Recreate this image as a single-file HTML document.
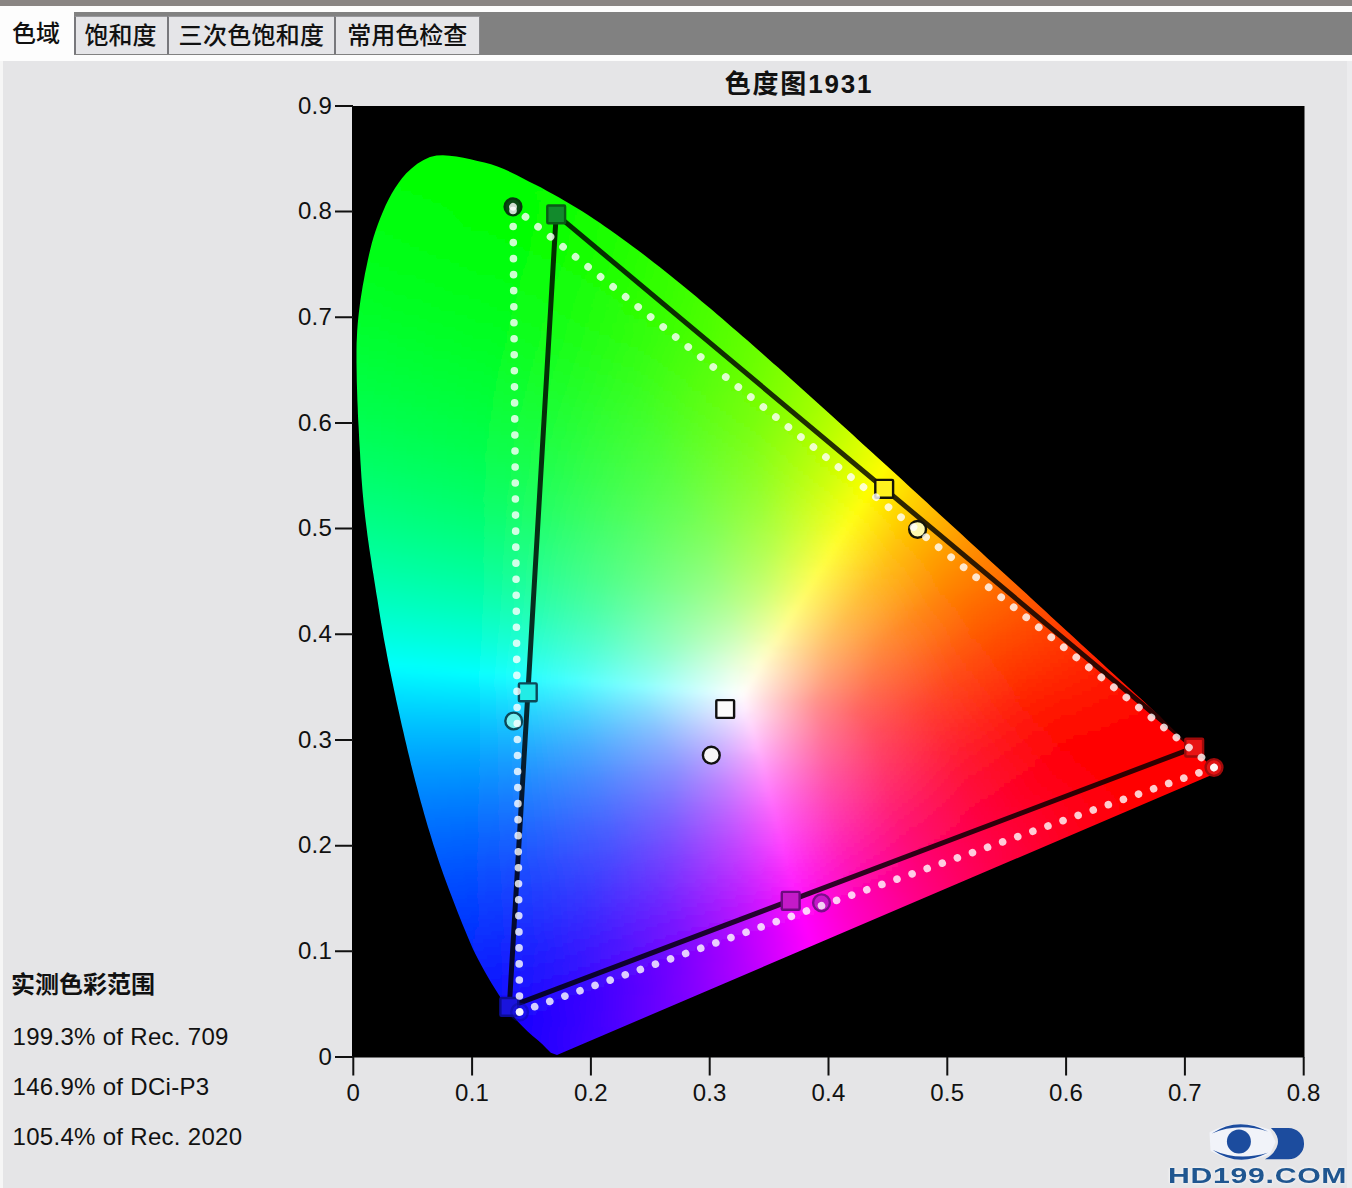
<!DOCTYPE html>
<html lang="zh-CN"><head><meta charset="utf-8"><title>色度图1931</title>
<style>
html,body{margin:0;padding:0}
body{width:1352px;height:1188px;position:relative;overflow:hidden;background:#e5e5e7;font-family:"Liberation Sans","Noto Sans CJK SC",sans-serif;color:#111}
.abs{position:absolute;white-space:nowrap}
.bar0{left:0;top:0;width:1352px;height:6px;background:#8a8583}
.bar1{left:0;top:6px;width:1352px;height:6px;background:#fdfdfd}
.bar2{left:0;top:12px;width:1352px;height:43px;background:#818181}
.bar3{left:0;top:55px;width:1352px;height:6px;background:#fcfcfc}
.lstrip{left:0;top:55px;width:3px;height:1133px;background:#f6f6f6}
.rstrip{left:1347px;top:61px;width:5px;height:1127px;background:#ececee}
.tab{top:16px;height:38px;background:#e5e5e8;border-left:2px solid #78787c;border-top:1px solid #98989c;box-sizing:border-box;font-size:24px;font-weight:500;line-height:37px;text-align:center}
.tab0{left:0;top:12px;width:74px;height:49px;background:#fdfdfd;font-size:24px;font-weight:500;line-height:44px;text-align:center;text-indent:-2px}
.lab{font-size:24px;line-height:24px;letter-spacing:.2px}
.yl{text-align:right;width:60px;left:272px}
.xl{text-align:center;width:80px}
.title{left:599px;width:400px;top:68px;text-align:center;font-weight:bold;font-size:26px;line-height:32px;letter-spacing:1.8px}
.info{left:12.5px;font-size:24px;line-height:30px;letter-spacing:.3px}
.logo{left:1168px;top:1165px;font-family:"Liberation Sans",sans-serif;font-weight:bold;font-size:21.5px;line-height:22px;color:#1f5690;letter-spacing:.5px;transform-origin:0 0;transform:scaleX(1.405);text-shadow:0 0 3px #fff}
</style></head><body>
<div class="abs bar0"></div><div class="abs bar1"></div><div class="abs bar2"></div><div class="abs bar3"></div><div class="abs lstrip"></div><div class="abs rstrip"></div>
<div class="abs tab0">色域</div>
<div class="abs tab" style="left:74px;width:93px;text-indent:-2px">饱和度</div>
<div class="abs tab" style="left:166.500px;width:168px;letter-spacing:.3px">三次色饱和度</div>
<div class="abs tab" style="left:334px;width:145.500px;border-right:1px solid #8a8a8e">常用色检查</div>
<div class="abs title">色度图1931</div>
<svg width="1352" height="1188" viewBox="0 0 1352 1188" style="position:absolute;left:0;top:0">
<defs><filter id="fb" filterUnits="userSpaceOnUse" x="330" y="130" width="920" height="950"><feGaussianBlur stdDeviation="2.5"/></filter><filter id="bl" x="-.05" y="-.05" width="1.1" height="1.1"><feGaussianBlur stdDeviation="0.7"/></filter><clipPath id="lc"><polygon points="557.0,1055.0 550.8,1052.8 546.5,1048.6 542.4,1044.3 537.6,1040.1 532.4,1035.8 527.4,1031.3 522.6,1026.6 518.0,1021.8 513.8,1016.7 509.8,1011.4 506.0,1006.0 502.4,1000.4 498.9,994.9 495.3,989.2 491.7,983.5 488.3,977.7 485.0,971.9 481.7,966.0 478.5,960.1 475.5,954.2 472.6,948.3 470.0,942.3 467.5,936.3 465.0,930.3 462.5,924.2 460.1,918.2 457.7,912.2 455.3,906.1 453.0,900.0 450.7,894.0 448.4,887.9 446.1,881.8 443.9,875.7 441.7,869.6 439.6,863.4 437.5,857.3 435.5,851.1 433.5,845.0 431.6,838.8 429.7,832.6 427.8,826.4 426.0,820.2 424.2,814.0 422.5,807.7 420.7,801.5 419.0,795.3 417.4,789.0 415.7,782.7 414.1,776.5 412.5,770.2 410.9,763.9 409.4,757.6 407.9,751.4 406.4,745.1 404.9,738.8 403.5,732.5 402.0,726.2 400.6,719.9 399.2,713.6 397.8,707.3 396.4,701.0 395.1,694.7 393.7,688.3 392.4,682.0 391.1,675.7 389.8,669.4 388.5,663.0 387.3,656.7 386.1,650.3 384.9,644.0 383.7,637.7 382.6,631.3 381.5,625.0 380.4,618.6 379.4,612.2 378.4,605.9 377.4,599.5 376.3,593.2 375.3,586.8 374.3,580.4 373.3,574.0 372.2,567.7 371.3,561.3 370.3,554.9 369.3,548.5 368.4,542.1 367.5,535.7 366.7,529.3 365.9,522.9 365.1,516.5 364.4,510.1 363.7,503.7 363.1,497.3 362.5,490.9 362.0,484.5 361.5,478.1 361.1,471.7 360.7,465.3 360.3,458.9 360.0,452.4 359.6,446.0 359.2,439.6 358.9,433.1 358.6,426.7 358.2,420.3 357.9,413.8 357.7,407.4 357.4,401.0 357.2,394.5 357.0,388.1 356.8,381.7 356.7,375.3 356.6,368.9 356.5,362.5 356.5,356.1 356.5,349.7 356.6,343.3 356.9,336.9 357.2,330.5 357.7,324.1 358.3,317.7 359.0,311.3 359.8,305.0 360.7,298.6 361.7,292.3 362.7,286.0 363.9,279.8 365.0,273.6 366.3,267.4 367.6,261.3 368.9,255.2 370.3,249.2 371.8,243.2 373.6,237.0 375.7,230.6 377.9,224.2 380.4,217.8 383.0,211.4 385.8,205.1 388.8,199.1 391.9,193.3 395.1,187.9 398.5,182.9 402.0,178.3 406.3,173.3 411.5,168.4 417.3,163.8 423.6,159.9 430.0,157.0 436.5,155.4 442.9,155.2 449.5,155.7 456.4,156.6 463.4,157.8 470.5,159.3 477.5,160.9 484.4,162.5 491.0,164.2 497.5,166.4 503.9,169.0 510.2,171.9 516.5,175.0 522.7,178.2 528.8,181.4 535.0,184.5 541.1,187.6 547.1,190.9 553.2,194.2 559.1,197.6 565.0,201.0 570.9,204.5 576.8,208.1 582.6,211.6 588.4,215.2 594.0,219.0 599.7,222.8 605.3,226.7 610.8,230.6 616.4,234.5 621.9,238.5 627.4,242.4 632.8,246.5 638.3,250.5 643.6,254.6 649.0,258.7 654.4,262.9 659.7,267.1 665.0,271.2 670.3,275.4 675.5,279.7 680.8,283.9 686.0,288.2 691.2,292.5 696.4,296.8 701.5,301.2 706.7,305.5 711.9,309.8 717.0,314.2 722.1,318.6 727.2,323.0 732.3,327.4 737.4,331.8 742.5,336.2 747.6,340.6 752.6,345.1 757.7,349.5 762.8,353.9 767.8,358.4 772.8,362.9 777.9,367.3 782.9,371.8 787.9,376.3 792.9,380.7 797.9,385.2 802.9,389.7 807.9,394.2 812.9,398.7 817.9,403.2 822.9,407.8 827.9,412.3 832.9,416.8 837.8,421.3 842.8,425.8 847.8,430.3 852.8,434.8 857.8,439.4 862.7,443.9 867.7,448.4 872.7,452.9 877.6,457.4 882.6,462.0 887.6,466.5 892.5,471.0 897.5,475.6 902.4,480.1 907.4,484.7 912.3,489.2 917.3,493.7 922.2,498.3 927.2,502.8 932.1,507.4 937.1,511.9 942.0,516.5 947.0,521.0 951.9,525.5 956.9,530.1 961.8,534.6 966.8,539.2 971.7,543.7 976.7,548.3 981.6,552.8 986.6,557.4 991.5,561.9 996.5,566.4 1001.4,571.0 1006.4,575.5 1011.3,580.0 1016.3,584.6 1021.2,589.1 1026.2,593.6 1031.2,598.2 1036.1,602.7 1041.0,607.3 1046.0,611.8 1050.9,616.4 1055.9,620.9 1060.8,625.5 1065.7,630.0 1070.7,634.6 1075.6,639.1 1080.6,643.7 1085.6,648.2 1090.5,652.7 1095.5,657.3 1100.4,661.8 1105.4,666.4 1110.3,670.9 1115.3,675.4 1120.2,680.0 1125.2,684.5 1130.2,689.0 1135.1,693.5 1140.1,698.1 1145.0,702.6 1150.0,707.2 1154.9,711.7 1159.9,716.3 1164.7,721.0 1169.5,725.7 1174.3,730.4 1179.1,735.1 1184.0,739.8 1188.8,744.5 1193.6,749.2 1198.4,753.9 1203.2,758.6 1208.1,763.2 1213.0,767.8 1218.0,772.3"/></clipPath><linearGradient id="g0" gradientUnits="userSpaceOnUse" x1="415" x2="481"><stop offset="0" stop-color="#00ff00"/><stop offset="1" stop-color="#00ff00"/></linearGradient><linearGradient id="g1" gradientUnits="userSpaceOnUse" x1="408" x2="498"><stop offset="0" stop-color="#00ff00"/><stop offset="1" stop-color="#00ff00"/></linearGradient><linearGradient id="g2" gradientUnits="userSpaceOnUse" x1="403" x2="509"><stop offset="0" stop-color="#00ff00"/><stop offset="1" stop-color="#00ff00"/></linearGradient><linearGradient id="g3" gradientUnits="userSpaceOnUse" x1="398" x2="520"><stop offset="0" stop-color="#00ff00"/><stop offset="1" stop-color="#00ff00"/></linearGradient><linearGradient id="g4" gradientUnits="userSpaceOnUse" x1="394" x2="528"><stop offset="0" stop-color="#00ff02"/><stop offset="1" stop-color="#01ff00"/></linearGradient><linearGradient id="g5" gradientUnits="userSpaceOnUse" x1="391" x2="535"><stop offset="0" stop-color="#00ff03"/><stop offset="1" stop-color="#03ff00"/></linearGradient><linearGradient id="g6" gradientUnits="userSpaceOnUse" x1="388" x2="544"><stop offset="0" stop-color="#00ff04"/><stop offset="0.872" stop-color="#01ff00"/><stop offset="1" stop-color="#06ff00"/></linearGradient><linearGradient id="g7" gradientUnits="userSpaceOnUse" x1="385" x2="551"><stop offset="0" stop-color="#00ff05"/><stop offset="0.687" stop-color="#00ff00"/><stop offset="0.964" stop-color="#06ff00"/><stop offset="1" stop-color="#08ff00"/></linearGradient><linearGradient id="g8" gradientUnits="userSpaceOnUse" x1="383" x2="559"><stop offset="0" stop-color="#00ff06"/><stop offset="0.636" stop-color="#00ff00"/><stop offset="0.898" stop-color="#05ff00"/><stop offset="1" stop-color="#0aff00"/></linearGradient><linearGradient id="g9" gradientUnits="userSpaceOnUse" x1="380" x2="566"><stop offset="0" stop-color="#00ff07"/><stop offset="0.613" stop-color="#00ff00"/><stop offset="0.86" stop-color="#05ff00"/><stop offset="1" stop-color="#0cff00"/></linearGradient><linearGradient id="g10" gradientUnits="userSpaceOnUse" x1="378" x2="572"><stop offset="0" stop-color="#00ff08"/><stop offset="0.619" stop-color="#00ff00"/><stop offset="0.825" stop-color="#05ff00"/><stop offset="1" stop-color="#0eff00"/></linearGradient><linearGradient id="g11" gradientUnits="userSpaceOnUse" x1="376" x2="580"><stop offset="0" stop-color="#00ff09"/><stop offset="0.627" stop-color="#00ff00"/><stop offset="0.971" stop-color="#0fff00"/><stop offset="1" stop-color="#11ff00"/></linearGradient><linearGradient id="g12" gradientUnits="userSpaceOnUse" x1="375" x2="587"><stop offset="0" stop-color="#00ff0a"/><stop offset="0.642" stop-color="#00ff00"/><stop offset="1" stop-color="#13ff00"/></linearGradient><linearGradient id="g13" gradientUnits="userSpaceOnUse" x1="373" x2="593"><stop offset="0" stop-color="#00ff0b"/><stop offset="0.655" stop-color="#00ff00"/><stop offset="1" stop-color="#15ff00"/></linearGradient><linearGradient id="g14" gradientUnits="userSpaceOnUse" x1="371" x2="599"><stop offset="0" stop-color="#00ff0c"/><stop offset="0.675" stop-color="#03ff00"/><stop offset="1" stop-color="#17ff00"/></linearGradient><linearGradient id="g15" gradientUnits="userSpaceOnUse" x1="369" x2="605"><stop offset="0" stop-color="#00ff0d"/><stop offset="0.669" stop-color="#03ff00"/><stop offset="1" stop-color="#19ff00"/></linearGradient><linearGradient id="g16" gradientUnits="userSpaceOnUse" x1="368" x2="610"><stop offset="0" stop-color="#00ff0e"/><stop offset="0.653" stop-color="#03ff00"/><stop offset="1" stop-color="#1bff00"/></linearGradient><linearGradient id="g17" gradientUnits="userSpaceOnUse" x1="366" x2="616"><stop offset="0" stop-color="#00ff0f"/><stop offset="0.632" stop-color="#03ff00"/><stop offset="1" stop-color="#1dff00"/></linearGradient><linearGradient id="g18" gradientUnits="userSpaceOnUse" x1="365" x2="623"><stop offset="0" stop-color="#00ff10"/><stop offset="0.62" stop-color="#03ff00"/><stop offset="1" stop-color="#20ff00"/></linearGradient><linearGradient id="g19" gradientUnits="userSpaceOnUse" x1="364" x2="628"><stop offset="0" stop-color="#00ff11"/><stop offset="0.606" stop-color="#03ff00"/><stop offset="1" stop-color="#22ff00"/></linearGradient><linearGradient id="g20" gradientUnits="userSpaceOnUse" x1="363" x2="633"><stop offset="0" stop-color="#00ff12"/><stop offset="0.593" stop-color="#03ff01"/><stop offset="1" stop-color="#24ff00"/></linearGradient><linearGradient id="g21" gradientUnits="userSpaceOnUse" x1="361" x2="639"><stop offset="0" stop-color="#00ff14"/><stop offset="0.576" stop-color="#03ff03"/><stop offset="1" stop-color="#26ff00"/></linearGradient><linearGradient id="g22" gradientUnits="userSpaceOnUse" x1="360" x2="644"><stop offset="0" stop-color="#00ff15"/><stop offset="0.563" stop-color="#03ff04"/><stop offset="0.901" stop-color="#1fff00"/><stop offset="1" stop-color="#28ff00"/></linearGradient><linearGradient id="g23" gradientUnits="userSpaceOnUse" x1="359" x2="649"><stop offset="0" stop-color="#00ff16"/><stop offset="0.552" stop-color="#03ff05"/><stop offset="0.828" stop-color="#1aff00"/><stop offset="1" stop-color="#2aff00"/></linearGradient><linearGradient id="g24" gradientUnits="userSpaceOnUse" x1="358" x2="656"><stop offset="0" stop-color="#00ff17"/><stop offset="0.537" stop-color="#03ff06"/><stop offset="0.805" stop-color="#1aff00"/><stop offset="1" stop-color="#2dff00"/></linearGradient><linearGradient id="g25" gradientUnits="userSpaceOnUse" x1="358" x2="660"><stop offset="0" stop-color="#00ff18"/><stop offset="0.53" stop-color="#03ff07"/><stop offset="0.795" stop-color="#1aff00"/><stop offset="1" stop-color="#2fff00"/></linearGradient><linearGradient id="g26" gradientUnits="userSpaceOnUse" x1="357" x2="665"><stop offset="0" stop-color="#00ff19"/><stop offset="0.519" stop-color="#03ff08"/><stop offset="0.799" stop-color="#1cff00"/><stop offset="1" stop-color="#31ff00"/></linearGradient><linearGradient id="g27" gradientUnits="userSpaceOnUse" x1="356" x2="670"><stop offset="0" stop-color="#00ff1a"/><stop offset="0.51" stop-color="#03ff09"/><stop offset="0.803" stop-color="#1eff00"/><stop offset="1" stop-color="#33ff00"/></linearGradient><linearGradient id="g28" gradientUnits="userSpaceOnUse" x1="355" x2="675"><stop offset="0" stop-color="#00ff1b"/><stop offset="0.5" stop-color="#03ff0b"/><stop offset="0.787" stop-color="#1eff00"/><stop offset="1" stop-color="#36ff00"/></linearGradient><linearGradient id="g29" gradientUnits="userSpaceOnUse" x1="354" x2="680"><stop offset="0" stop-color="#00ff1c"/><stop offset="0.491" stop-color="#03ff0c"/><stop offset="0.798" stop-color="#21ff00"/><stop offset="1" stop-color="#38ff00"/></linearGradient><linearGradient id="g30" gradientUnits="userSpaceOnUse" x1="354" x2="686"><stop offset="0" stop-color="#00ff1d"/><stop offset="0.476" stop-color="#03ff0d"/><stop offset="0.801" stop-color="#23ff00"/><stop offset="1" stop-color="#3bff00"/></linearGradient><linearGradient id="g31" gradientUnits="userSpaceOnUse" x1="353" x2="691"><stop offset="0" stop-color="#00ff1e"/><stop offset="0.467" stop-color="#03ff0e"/><stop offset="0.805" stop-color="#25ff00"/><stop offset="1" stop-color="#3dff00"/></linearGradient><linearGradient id="g32" gradientUnits="userSpaceOnUse" x1="352" x2="696"><stop offset="0" stop-color="#00ff20"/><stop offset="0.459" stop-color="#03ff10"/><stop offset="0.808" stop-color="#27ff00"/><stop offset="1" stop-color="#40ff00"/></linearGradient><linearGradient id="g33" gradientUnits="userSpaceOnUse" x1="351" x2="701"><stop offset="0" stop-color="#00ff21"/><stop offset="0.451" stop-color="#03ff11"/><stop offset="0.811" stop-color="#2aff00"/><stop offset="1" stop-color="#43ff00"/></linearGradient><linearGradient id="g34" gradientUnits="userSpaceOnUse" x1="351" x2="705"><stop offset="0" stop-color="#00ff22"/><stop offset="0.446" stop-color="#03ff12"/><stop offset="0.819" stop-color="#2cff00"/><stop offset="1" stop-color="#45ff00"/></linearGradient><linearGradient id="g35" gradientUnits="userSpaceOnUse" x1="350" x2="710"><stop offset="0" stop-color="#00ff23"/><stop offset="0.439" stop-color="#03ff13"/><stop offset="0.828" stop-color="#2fff00"/><stop offset="1" stop-color="#47ff00"/></linearGradient><linearGradient id="g36" gradientUnits="userSpaceOnUse" x1="350" x2="714"><stop offset="0" stop-color="#00ff24"/><stop offset="0.429" stop-color="#03ff14"/><stop offset="0.835" stop-color="#32ff00"/><stop offset="1" stop-color="#4aff00"/></linearGradient><linearGradient id="g37" gradientUnits="userSpaceOnUse" x1="349" x2="719"><stop offset="0" stop-color="#00ff25"/><stop offset="0.422" stop-color="#03ff16"/><stop offset="0.832" stop-color="#33ff00"/><stop offset="1" stop-color="#4cff00"/></linearGradient><linearGradient id="g38" gradientUnits="userSpaceOnUse" x1="349" x2="725"><stop offset="0" stop-color="#00ff27"/><stop offset="0.415" stop-color="#03ff17"/><stop offset="0.835" stop-color="#36ff00"/><stop offset="1" stop-color="#50ff00"/></linearGradient><linearGradient id="g39" gradientUnits="userSpaceOnUse" x1="348" x2="728"><stop offset="0" stop-color="#00ff28"/><stop offset="0.411" stop-color="#03ff18"/><stop offset="0.842" stop-color="#39ff00"/><stop offset="1" stop-color="#52ff00"/></linearGradient><linearGradient id="g40" gradientUnits="userSpaceOnUse" x1="348" x2="734"><stop offset="0" stop-color="#00ff29"/><stop offset="0.399" stop-color="#03ff19"/><stop offset="0.762" stop-color="#2fff03"/><stop offset="1" stop-color="#55ff00"/></linearGradient><linearGradient id="g41" gradientUnits="userSpaceOnUse" x1="347" x2="739"><stop offset="0" stop-color="#00ff2a"/><stop offset="0.393" stop-color="#03ff1b"/><stop offset="0.791" stop-color="#35ff01"/><stop offset="1" stop-color="#58ff00"/></linearGradient><linearGradient id="g42" gradientUnits="userSpaceOnUse" x1="347" x2="743"><stop offset="0" stop-color="#00ff2c"/><stop offset="0.389" stop-color="#03ff1c"/><stop offset="0.763" stop-color="#33ff04"/><stop offset="0.904" stop-color="#4aff00"/><stop offset="1" stop-color="#5bff00"/></linearGradient><linearGradient id="g43" gradientUnits="userSpaceOnUse" x1="347" x2="747"><stop offset="0" stop-color="#00ff2d"/><stop offset="0.38" stop-color="#03ff1d"/><stop offset="0.74" stop-color="#31ff07"/><stop offset="0.85" stop-color="#43ff00"/><stop offset="1" stop-color="#5eff00"/></linearGradient><linearGradient id="g44" gradientUnits="userSpaceOnUse" x1="346" x2="752"><stop offset="0" stop-color="#00ff2e"/><stop offset="0.374" stop-color="#03ff1f"/><stop offset="0.764" stop-color="#37ff05"/><stop offset="0.872" stop-color="#49ff00"/><stop offset="1" stop-color="#61ff00"/></linearGradient><linearGradient id="g45" gradientUnits="userSpaceOnUse" x1="346" x2="756"><stop offset="0" stop-color="#00ff30"/><stop offset="0.371" stop-color="#03ff20"/><stop offset="0.741" stop-color="#35ff08"/><stop offset="0.859" stop-color="#48ff00"/><stop offset="1" stop-color="#64ff00"/></linearGradient><linearGradient id="g46" gradientUnits="userSpaceOnUse" x1="346" x2="762"><stop offset="0" stop-color="#00ff31"/><stop offset="0.361" stop-color="#03ff21"/><stop offset="0.712" stop-color="#32ff0b"/><stop offset="0.846" stop-color="#49ff00"/><stop offset="1" stop-color="#68ff00"/></linearGradient><linearGradient id="g47" gradientUnits="userSpaceOnUse" x1="346" x2="766"><stop offset="0" stop-color="#00ff32"/><stop offset="0.357" stop-color="#03ff22"/><stop offset="0.686" stop-color="#30ff0e"/><stop offset="0.852" stop-color="#4cff00"/><stop offset="1" stop-color="#6bff00"/></linearGradient><linearGradient id="g48" gradientUnits="userSpaceOnUse" x1="346" x2="770"><stop offset="0" stop-color="#00ff34"/><stop offset="0.354" stop-color="#03ff24"/><stop offset="0.717" stop-color="#36ff0c"/><stop offset="0.858" stop-color="#50ff00"/><stop offset="1" stop-color="#6eff00"/></linearGradient><linearGradient id="g49" gradientUnits="userSpaceOnUse" x1="346" x2="774"><stop offset="0" stop-color="#00ff35"/><stop offset="0.346" stop-color="#03ff25"/><stop offset="0.682" stop-color="#32ff10"/><stop offset="0.86" stop-color="#52ff00"/><stop offset="1" stop-color="#71ff00"/></linearGradient><linearGradient id="g50" gradientUnits="userSpaceOnUse" x1="346" x2="780"><stop offset="0" stop-color="#00ff36"/><stop offset="0.341" stop-color="#03ff26"/><stop offset="0.668" stop-color="#32ff12"/><stop offset="0.862" stop-color="#56ff00"/><stop offset="1" stop-color="#76ff00"/></linearGradient><linearGradient id="g51" gradientUnits="userSpaceOnUse" x1="346" x2="784"><stop offset="0" stop-color="#00ff38"/><stop offset="0.333" stop-color="#03ff28"/><stop offset="0.676" stop-color="#35ff12"/><stop offset="0.858" stop-color="#58ff00"/><stop offset="1" stop-color="#79ff00"/></linearGradient><linearGradient id="g52" gradientUnits="userSpaceOnUse" x1="346" x2="788"><stop offset="0" stop-color="#00ff39"/><stop offset="0.33" stop-color="#03ff29"/><stop offset="0.665" stop-color="#35ff14"/><stop offset="0.86" stop-color="#5aff00"/><stop offset="1" stop-color="#7dff00"/></linearGradient><linearGradient id="g53" gradientUnits="userSpaceOnUse" x1="346" x2="794"><stop offset="0" stop-color="#00ff3b"/><stop offset="0.321" stop-color="#03ff2b"/><stop offset="0.661" stop-color="#36ff15"/><stop offset="0.862" stop-color="#5eff00"/><stop offset="1" stop-color="#82ff00"/></linearGradient><linearGradient id="g54" gradientUnits="userSpaceOnUse" x1="346" x2="798"><stop offset="0" stop-color="#00ff3c"/><stop offset="0.319" stop-color="#03ff2c"/><stop offset="0.65" stop-color="#36ff17"/><stop offset="0.863" stop-color="#61ff00"/><stop offset="1" stop-color="#86ff00"/></linearGradient><linearGradient id="g55" gradientUnits="userSpaceOnUse" x1="346" x2="802"><stop offset="0" stop-color="#00ff3e"/><stop offset="0.311" stop-color="#03ff2d"/><stop offset="0.627" stop-color="#33ff1a"/><stop offset="0.868" stop-color="#65ff00"/><stop offset="1" stop-color="#8aff00"/></linearGradient><linearGradient id="g56" gradientUnits="userSpaceOnUse" x1="346" x2="806"><stop offset="0" stop-color="#00ff3f"/><stop offset="0.309" stop-color="#03ff2f"/><stop offset="0.648" stop-color="#39ff19"/><stop offset="0.87" stop-color="#68ff00"/><stop offset="1" stop-color="#8eff00"/></linearGradient><linearGradient id="g57" gradientUnits="userSpaceOnUse" x1="346" x2="810"><stop offset="0" stop-color="#00ff41"/><stop offset="0.306" stop-color="#03ff30"/><stop offset="0.629" stop-color="#37ff1c"/><stop offset="0.871" stop-color="#6bff00"/><stop offset="1" stop-color="#92ff00"/></linearGradient><linearGradient id="g58" gradientUnits="userSpaceOnUse" x1="346" x2="816"><stop offset="0" stop-color="#00ff42"/><stop offset="0.298" stop-color="#03ff32"/><stop offset="0.626" stop-color="#38ff1d"/><stop offset="0.872" stop-color="#70ff00"/><stop offset="1" stop-color="#97ff00"/></linearGradient><linearGradient id="g59" gradientUnits="userSpaceOnUse" x1="346" x2="820"><stop offset="0" stop-color="#00ff44"/><stop offset="0.295" stop-color="#03ff33"/><stop offset="0.616" stop-color="#38ff1f"/><stop offset="0.861" stop-color="#6fff00"/><stop offset="1" stop-color="#9cff00"/></linearGradient><linearGradient id="g60" gradientUnits="userSpaceOnUse" x1="346" x2="824"><stop offset="0" stop-color="#00ff45"/><stop offset="0.293" stop-color="#03ff34"/><stop offset="0.607" stop-color="#38ff21"/><stop offset="0.854" stop-color="#70ff00"/><stop offset="1" stop-color="#a0ff00"/></linearGradient><linearGradient id="g61" gradientUnits="userSpaceOnUse" x1="346" x2="828"><stop offset="0" stop-color="#00ff47"/><stop offset="0.286" stop-color="#03ff36"/><stop offset="0.61" stop-color="#3aff22"/><stop offset="0.871" stop-color="#79ff00"/><stop offset="1" stop-color="#a5ff00"/></linearGradient><linearGradient id="g62" gradientUnits="userSpaceOnUse" x1="346" x2="834"><stop offset="0" stop-color="#00ff49"/><stop offset="0.283" stop-color="#03ff37"/><stop offset="0.598" stop-color="#3aff24"/><stop offset="0.869" stop-color="#7cff00"/><stop offset="1" stop-color="#acff00"/></linearGradient><linearGradient id="g63" gradientUnits="userSpaceOnUse" x1="347" x2="837"><stop offset="0" stop-color="#00ff4a"/><stop offset="0.278" stop-color="#03ff39"/><stop offset="0.6" stop-color="#3cff25"/><stop offset="0.853" stop-color="#7aff00"/><stop offset="1" stop-color="#b0ff00"/></linearGradient><linearGradient id="g64" gradientUnits="userSpaceOnUse" x1="347" x2="841"><stop offset="0" stop-color="#00ff4c"/><stop offset="0.275" stop-color="#03ff3a"/><stop offset="0.591" stop-color="#3cff27"/><stop offset="0.846" stop-color="#7bff02"/><stop offset="1" stop-color="#b5ff00"/></linearGradient><linearGradient id="g65" gradientUnits="userSpaceOnUse" x1="347" x2="847"><stop offset="0" stop-color="#00ff4e"/><stop offset="0.272" stop-color="#03ff3c"/><stop offset="0.6" stop-color="#40ff27"/><stop offset="0.836" stop-color="#7cff04"/><stop offset="0.916" stop-color="#99ff00"/><stop offset="1" stop-color="#bcff00"/></linearGradient><linearGradient id="g66" gradientUnits="userSpaceOnUse" x1="347" x2="851"><stop offset="0" stop-color="#00ff4f"/><stop offset="0.266" stop-color="#03ff3e"/><stop offset="0.591" stop-color="#40ff29"/><stop offset="0.81" stop-color="#77ff09"/><stop offset="0.881" stop-color="#90ff00"/><stop offset="1" stop-color="#c1ff00"/></linearGradient><linearGradient id="g67" gradientUnits="userSpaceOnUse" x1="347" x2="855"><stop offset="0" stop-color="#00ff51"/><stop offset="0.264" stop-color="#03ff3f"/><stop offset="0.587" stop-color="#40ff2b"/><stop offset="0.803" stop-color="#78ff0b"/><stop offset="0.878" stop-color="#93ff00"/><stop offset="1" stop-color="#c7ff00"/></linearGradient><linearGradient id="g68" gradientUnits="userSpaceOnUse" x1="347" x2="859"><stop offset="0" stop-color="#00ff53"/><stop offset="0.262" stop-color="#03ff41"/><stop offset="0.586" stop-color="#42ff2c"/><stop offset="0.797" stop-color="#79ff0c"/><stop offset="0.879" stop-color="#97ff00"/><stop offset="1" stop-color="#cdff00"/></linearGradient><linearGradient id="g69" gradientUnits="userSpaceOnUse" x1="348" x2="864"><stop offset="0" stop-color="#00ff55"/><stop offset="0.256" stop-color="#03ff43"/><stop offset="0.589" stop-color="#45ff2d"/><stop offset="0.791" stop-color="#7bff0e"/><stop offset="0.876" stop-color="#9bff00"/><stop offset="1" stop-color="#d3ff00"/></linearGradient><linearGradient id="g70" gradientUnits="userSpaceOnUse" x1="348" x2="868"><stop offset="0" stop-color="#00ff56"/><stop offset="0.254" stop-color="#03ff44"/><stop offset="0.581" stop-color="#45ff2f"/><stop offset="0.769" stop-color="#77ff12"/><stop offset="0.877" stop-color="#a0ff00"/><stop offset="1" stop-color="#d9ff00"/></linearGradient><linearGradient id="g71" gradientUnits="userSpaceOnUse" x1="348" x2="872"><stop offset="0" stop-color="#00ff58"/><stop offset="0.252" stop-color="#03ff46"/><stop offset="0.576" stop-color="#45ff31"/><stop offset="0.775" stop-color="#7cff12"/><stop offset="0.878" stop-color="#a5ff00"/><stop offset="1" stop-color="#dfff00"/></linearGradient><linearGradient id="g72" gradientUnits="userSpaceOnUse" x1="348" x2="878"><stop offset="0" stop-color="#00ff5a"/><stop offset="0.249" stop-color="#03ff48"/><stop offset="0.577" stop-color="#48ff32"/><stop offset="0.766" stop-color="#7dff14"/><stop offset="0.875" stop-color="#aaff00"/><stop offset="1" stop-color="#e8ff00"/></linearGradient><linearGradient id="g73" gradientUnits="userSpaceOnUse" x1="348" x2="882"><stop offset="0" stop-color="#00ff5c"/><stop offset="0.243" stop-color="#03ff4a"/><stop offset="0.581" stop-color="#4bff33"/><stop offset="0.757" stop-color="#7dff16"/><stop offset="0.876" stop-color="#afff00"/><stop offset="1" stop-color="#eeff00"/></linearGradient><linearGradient id="g74" gradientUnits="userSpaceOnUse" x1="348" x2="886"><stop offset="0" stop-color="#00ff5e"/><stop offset="0.242" stop-color="#03ff4b"/><stop offset="0.565" stop-color="#49ff36"/><stop offset="0.747" stop-color="#7dff19"/><stop offset="0.877" stop-color="#b4ff00"/><stop offset="1" stop-color="#f5ff00"/></linearGradient><linearGradient id="g75" gradientUnits="userSpaceOnUse" x1="349" x2="891"><stop offset="0" stop-color="#00ff60"/><stop offset="0.24" stop-color="#03ff4d"/><stop offset="0.568" stop-color="#4cff37"/><stop offset="0.745" stop-color="#80ff1a"/><stop offset="0.878" stop-color="#bbff00"/><stop offset="1" stop-color="#fcff00"/></linearGradient><linearGradient id="g76" gradientUnits="userSpaceOnUse" x1="349" x2="895"><stop offset="0" stop-color="#00ff62"/><stop offset="0.234" stop-color="#03ff4f"/><stop offset="0.571" stop-color="#4fff38"/><stop offset="0.736" stop-color="#80ff1d"/><stop offset="0.868" stop-color="#bbff00"/><stop offset="0.996" stop-color="#fffd00"/><stop offset="1" stop-color="#fffb00"/></linearGradient><linearGradient id="g77" gradientUnits="userSpaceOnUse" x1="349" x2="899"><stop offset="0" stop-color="#00ff64"/><stop offset="0.233" stop-color="#03ff51"/><stop offset="0.567" stop-color="#4fff3a"/><stop offset="0.745" stop-color="#87ff1c"/><stop offset="0.88" stop-color="#c6ff00"/><stop offset="0.985" stop-color="#fffd00"/><stop offset="1" stop-color="#fff500"/></linearGradient><linearGradient id="g78" gradientUnits="userSpaceOnUse" x1="349" x2="903"><stop offset="0" stop-color="#00ff66"/><stop offset="0.231" stop-color="#03ff53"/><stop offset="0.563" stop-color="#50ff3c"/><stop offset="0.729" stop-color="#84ff20"/><stop offset="0.856" stop-color="#bfff03"/><stop offset="0.975" stop-color="#fffc00"/><stop offset="1" stop-color="#ffee00"/></linearGradient><linearGradient id="g79" gradientUnits="userSpaceOnUse" x1="350" x2="908"><stop offset="0" stop-color="#00ff68"/><stop offset="0.229" stop-color="#03ff55"/><stop offset="0.566" stop-color="#54ff3d"/><stop offset="0.724" stop-color="#86ff21"/><stop offset="0.853" stop-color="#c4ff04"/><stop offset="0.925" stop-color="#ecff00"/><stop offset="0.961" stop-color="#fffd00"/><stop offset="1" stop-color="#ffe700"/></linearGradient><linearGradient id="g80" gradientUnits="userSpaceOnUse" x1="350" x2="912"><stop offset="0" stop-color="#00ff6a"/><stop offset="0.228" stop-color="#03ff57"/><stop offset="0.562" stop-color="#55ff3f"/><stop offset="0.715" stop-color="#86ff24"/><stop offset="0.84" stop-color="#c2ff08"/><stop offset="0.89" stop-color="#deff00"/><stop offset="0.95" stop-color="#fffc00"/><stop offset="1" stop-color="#ffe200"/></linearGradient><linearGradient id="g81" gradientUnits="userSpaceOnUse" x1="350" x2="916"><stop offset="0" stop-color="#00ff6c"/><stop offset="0.226" stop-color="#03ff59"/><stop offset="0.562" stop-color="#56ff41"/><stop offset="0.724" stop-color="#8dff23"/><stop offset="0.855" stop-color="#d0ff05"/><stop offset="0.898" stop-color="#e9ff00"/><stop offset="0.94" stop-color="#fffc00"/><stop offset="1" stop-color="#ffdc00"/></linearGradient><linearGradient id="g82" gradientUnits="userSpaceOnUse" x1="350" x2="920"><stop offset="0" stop-color="#00ff6f"/><stop offset="0.225" stop-color="#03ff5b"/><stop offset="0.558" stop-color="#57ff43"/><stop offset="0.716" stop-color="#8dff26"/><stop offset="0.846" stop-color="#d0ff08"/><stop offset="0.888" stop-color="#e9ff00"/><stop offset="0.926" stop-color="#fffd00"/><stop offset="1" stop-color="#ffd600"/></linearGradient><linearGradient id="g83" gradientUnits="userSpaceOnUse" x1="351" x2="925"><stop offset="0" stop-color="#00ff71"/><stop offset="0.22" stop-color="#03ff5d"/><stop offset="0.561" stop-color="#5bff44"/><stop offset="0.711" stop-color="#8fff28"/><stop offset="0.84" stop-color="#d3ff09"/><stop offset="0.892" stop-color="#f3ff00"/><stop offset="0.916" stop-color="#fffc00"/><stop offset="1" stop-color="#ffd000"/></linearGradient><linearGradient id="g84" gradientUnits="userSpaceOnUse" x1="351" x2="929"><stop offset="0" stop-color="#00ff73"/><stop offset="0.218" stop-color="#03ff5f"/><stop offset="0.557" stop-color="#5cff46"/><stop offset="0.702" stop-color="#8fff2b"/><stop offset="0.824" stop-color="#cfff0e"/><stop offset="0.889" stop-color="#f8ff00"/><stop offset="0.907" stop-color="#fffb00"/><stop offset="1" stop-color="#ffcb00"/></linearGradient><linearGradient id="g85" gradientUnits="userSpaceOnUse" x1="351" x2="935"><stop offset="0" stop-color="#00ff75"/><stop offset="0.216" stop-color="#03ff61"/><stop offset="0.555" stop-color="#5eff48"/><stop offset="0.699" stop-color="#92ff2c"/><stop offset="0.829" stop-color="#daff0d"/><stop offset="0.89" stop-color="#fffd00"/><stop offset="0.986" stop-color="#ffca00"/><stop offset="1" stop-color="#ffc400"/></linearGradient><linearGradient id="g86" gradientUnits="userSpaceOnUse" x1="351" x2="939"><stop offset="0" stop-color="#00ff78"/><stop offset="0.214" stop-color="#03ff64"/><stop offset="0.551" stop-color="#5fff4a"/><stop offset="0.69" stop-color="#92ff30"/><stop offset="0.816" stop-color="#d8ff11"/><stop offset="0.878" stop-color="#fffe00"/><stop offset="0.983" stop-color="#ffc600"/><stop offset="1" stop-color="#ffbf00"/></linearGradient><linearGradient id="g87" gradientUnits="userSpaceOnUse" x1="352" x2="942"><stop offset="0" stop-color="#00ff7a"/><stop offset="0.21" stop-color="#03ff66"/><stop offset="0.559" stop-color="#64ff4b"/><stop offset="0.698" stop-color="#99ff2f"/><stop offset="0.841" stop-color="#edff0b"/><stop offset="0.871" stop-color="#fffd03"/><stop offset="0.973" stop-color="#ffc600"/><stop offset="1" stop-color="#ffbb00"/></linearGradient><linearGradient id="g88" gradientUnits="userSpaceOnUse" x1="352" x2="948"><stop offset="0" stop-color="#00ff7c"/><stop offset="0.208" stop-color="#03ff68"/><stop offset="0.547" stop-color="#63ff4e"/><stop offset="0.681" stop-color="#96ff34"/><stop offset="0.795" stop-color="#d8ff17"/><stop offset="0.859" stop-color="#fffc06"/><stop offset="0.899" stop-color="#ffe400"/><stop offset="1" stop-color="#ffb400"/></linearGradient><linearGradient id="g89" gradientUnits="userSpaceOnUse" x1="352" x2="952"><stop offset="0" stop-color="#00ff7f"/><stop offset="0.21" stop-color="#03ff6a"/><stop offset="0.547" stop-color="#65ff50"/><stop offset="0.68" stop-color="#99ff35"/><stop offset="0.807" stop-color="#e5ff15"/><stop offset="0.847" stop-color="#fffe0a"/><stop offset="0.893" stop-color="#ffe100"/><stop offset="1" stop-color="#ffb000"/></linearGradient><linearGradient id="g90" gradientUnits="userSpaceOnUse" x1="353" x2="955"><stop offset="0" stop-color="#00ff81"/><stop offset="0.206" stop-color="#03ff6d"/><stop offset="0.555" stop-color="#6aff51"/><stop offset="0.678" stop-color="#9cff37"/><stop offset="0.807" stop-color="#ebff16"/><stop offset="0.841" stop-color="#fffc0d"/><stop offset="0.89" stop-color="#ffde00"/><stop offset="1" stop-color="#ffac00"/></linearGradient><linearGradient id="g91" gradientUnits="userSpaceOnUse" x1="353" x2="961"><stop offset="0" stop-color="#00ff83"/><stop offset="0.204" stop-color="#03ff6f"/><stop offset="0.553" stop-color="#6dff53"/><stop offset="0.668" stop-color="#9cff3b"/><stop offset="0.789" stop-color="#e7ff1b"/><stop offset="0.826" stop-color="#fffe11"/><stop offset="0.888" stop-color="#ffd800"/><stop offset="1" stop-color="#ffa600"/></linearGradient><linearGradient id="g92" gradientUnits="userSpaceOnUse" x1="354" x2="964"><stop offset="0" stop-color="#00ff86"/><stop offset="0.203" stop-color="#03ff72"/><stop offset="0.544" stop-color="#6cff56"/><stop offset="0.669" stop-color="#a0ff3c"/><stop offset="0.79" stop-color="#edff1d"/><stop offset="0.82" stop-color="#fffc14"/><stop offset="0.889" stop-color="#ffd300"/><stop offset="1" stop-color="#ffa200"/></linearGradient><linearGradient id="g93" gradientUnits="userSpaceOnUse" x1="354" x2="968"><stop offset="0" stop-color="#00ff88"/><stop offset="0.202" stop-color="#03ff74"/><stop offset="0.544" stop-color="#6eff58"/><stop offset="0.664" stop-color="#a2ff3f"/><stop offset="0.779" stop-color="#ebff21"/><stop offset="0.808" stop-color="#fffe18"/><stop offset="0.889" stop-color="#ffcd00"/><stop offset="1" stop-color="#ff9d00"/></linearGradient><linearGradient id="g94" gradientUnits="userSpaceOnUse" x1="354" x2="974"><stop offset="0" stop-color="#00ff8b"/><stop offset="0.2" stop-color="#03ff77"/><stop offset="0.461" stop-color="#56ff63"/><stop offset="0.59" stop-color="#84ff51"/><stop offset="0.681" stop-color="#b1ff3b"/><stop offset="0.797" stop-color="#fffd1c"/><stop offset="0.887" stop-color="#ffc800"/><stop offset="1" stop-color="#ff9700"/></linearGradient><linearGradient id="g95" gradientUnits="userSpaceOnUse" x1="355" x2="977"><stop offset="0" stop-color="#00ff8d"/><stop offset="0.196" stop-color="#03ff7a"/><stop offset="0.447" stop-color="#53ff66"/><stop offset="0.576" stop-color="#81ff56"/><stop offset="0.669" stop-color="#aeff40"/><stop offset="0.788" stop-color="#fffe20"/><stop offset="0.871" stop-color="#ffcb02"/><stop offset="1" stop-color="#ff9300"/></linearGradient><linearGradient id="g96" gradientUnits="userSpaceOnUse" x1="355" x2="981"><stop offset="0" stop-color="#00ff90"/><stop offset="0.195" stop-color="#03ff7c"/><stop offset="0.454" stop-color="#58ff68"/><stop offset="0.581" stop-color="#86ff57"/><stop offset="0.677" stop-color="#b8ff40"/><stop offset="0.78" stop-color="#fffd23"/><stop offset="0.879" stop-color="#ffc200"/><stop offset="1" stop-color="#ff8f00"/></linearGradient><linearGradient id="g97" gradientUnits="userSpaceOnUse" x1="356" x2="986"><stop offset="0" stop-color="#00ff92"/><stop offset="0.194" stop-color="#03ff7f"/><stop offset="0.451" stop-color="#59ff6a"/><stop offset="0.571" stop-color="#85ff5b"/><stop offset="0.667" stop-color="#b7ff44"/><stop offset="0.768" stop-color="#fffe28"/><stop offset="0.857" stop-color="#ffc706"/><stop offset="0.895" stop-color="#ffb500"/><stop offset="1" stop-color="#ff8a00"/></linearGradient><linearGradient id="g98" gradientUnits="userSpaceOnUse" x1="356" x2="990"><stop offset="0" stop-color="#00ff95"/><stop offset="0.192" stop-color="#03ff82"/><stop offset="0.438" stop-color="#57ff6d"/><stop offset="0.555" stop-color="#82ff60"/><stop offset="0.647" stop-color="#afff4b"/><stop offset="0.76" stop-color="#fffd2b"/><stop offset="0.849" stop-color="#ffc609"/><stop offset="0.89" stop-color="#ffb200"/><stop offset="1" stop-color="#ff8600"/></linearGradient><linearGradient id="g99" gradientUnits="userSpaceOnUse" x1="357" x2="995"><stop offset="0" stop-color="#00ff98"/><stop offset="0.188" stop-color="#03ff85"/><stop offset="0.429" stop-color="#57ff70"/><stop offset="0.552" stop-color="#84ff63"/><stop offset="0.646" stop-color="#b4ff4c"/><stop offset="0.749" stop-color="#fffe30"/><stop offset="0.843" stop-color="#ffc30a"/><stop offset="0.887" stop-color="#ffae00"/><stop offset="1" stop-color="#ff8100"/></linearGradient><linearGradient id="g100" gradientUnits="userSpaceOnUse" x1="357" x2="999"><stop offset="0" stop-color="#00ff9a"/><stop offset="0.187" stop-color="#03ff88"/><stop offset="0.43" stop-color="#59ff72"/><stop offset="0.551" stop-color="#87ff65"/><stop offset="0.642" stop-color="#b6ff4f"/><stop offset="0.741" stop-color="#fffd33"/><stop offset="0.835" stop-color="#ffc20d"/><stop offset="0.885" stop-color="#ffaa00"/><stop offset="1" stop-color="#ff7d00"/></linearGradient><linearGradient id="g101" gradientUnits="userSpaceOnUse" x1="358" x2="1004"><stop offset="0" stop-color="#00ff9d"/><stop offset="0.186" stop-color="#03ff8b"/><stop offset="0.424" stop-color="#59ff75"/><stop offset="0.548" stop-color="#89ff68"/><stop offset="0.638" stop-color="#b9ff52"/><stop offset="0.731" stop-color="#fffe38"/><stop offset="0.824" stop-color="#ffc211"/><stop offset="0.882" stop-color="#ffa600"/><stop offset="1" stop-color="#ff7900"/></linearGradient><linearGradient id="g102" gradientUnits="userSpaceOnUse" x1="359" x2="1009"><stop offset="0" stop-color="#00ffa0"/><stop offset="0.182" stop-color="#03ff8e"/><stop offset="0.425" stop-color="#5cff77"/><stop offset="0.538" stop-color="#89ff6c"/><stop offset="0.625" stop-color="#b6ff57"/><stop offset="0.723" stop-color="#fffc3b"/><stop offset="0.818" stop-color="#ffbf12"/><stop offset="0.88" stop-color="#ffa100"/><stop offset="1" stop-color="#ff7400"/></linearGradient><linearGradient id="g103" gradientUnits="userSpaceOnUse" x1="359" x2="1013"><stop offset="0" stop-color="#00ffa3"/><stop offset="0.18" stop-color="#03ff91"/><stop offset="0.41" stop-color="#58ff7a"/><stop offset="0.529" stop-color="#88ff70"/><stop offset="0.612" stop-color="#b3ff5d"/><stop offset="0.713" stop-color="#fffe40"/><stop offset="0.81" stop-color="#ffbe15"/><stop offset="0.881" stop-color="#ff9c00"/><stop offset="1" stop-color="#ff7000"/></linearGradient><linearGradient id="g104" gradientUnits="userSpaceOnUse" x1="360" x2="1016"><stop offset="0" stop-color="#00ffa5"/><stop offset="0.18" stop-color="#03ff94"/><stop offset="0.427" stop-color="#61ff7c"/><stop offset="0.534" stop-color="#8dff72"/><stop offset="0.616" stop-color="#baff5e"/><stop offset="0.707" stop-color="#fffc43"/><stop offset="0.802" stop-color="#ffbe18"/><stop offset="0.881" stop-color="#ff9800"/><stop offset="1" stop-color="#ff6d00"/></linearGradient><linearGradient id="g105" gradientUnits="userSpaceOnUse" x1="360" x2="1022"><stop offset="0" stop-color="#00ffa8"/><stop offset="0.178" stop-color="#03ff97"/><stop offset="0.396" stop-color="#57ff80"/><stop offset="0.526" stop-color="#8dff76"/><stop offset="0.61" stop-color="#bcff61"/><stop offset="0.695" stop-color="#fffe49"/><stop offset="0.767" stop-color="#ffcb25"/><stop offset="0.873" stop-color="#ff9600"/><stop offset="1" stop-color="#ff6800"/></linearGradient><linearGradient id="g106" gradientUnits="userSpaceOnUse" x1="361" x2="1025"><stop offset="0" stop-color="#00ffab"/><stop offset="0.175" stop-color="#03ff9a"/><stop offset="0.37" stop-color="#4eff85"/><stop offset="0.524" stop-color="#90ff79"/><stop offset="0.602" stop-color="#bbff66"/><stop offset="0.687" stop-color="#fffe4e"/><stop offset="0.792" stop-color="#ffb81b"/><stop offset="0.877" stop-color="#ff9000"/><stop offset="1" stop-color="#ff6500"/></linearGradient><linearGradient id="g107" gradientUnits="userSpaceOnUse" x1="362" x2="1030"><stop offset="0" stop-color="#00ffae"/><stop offset="0.174" stop-color="#03ff9d"/><stop offset="0.374" stop-color="#52ff87"/><stop offset="0.521" stop-color="#92ff7c"/><stop offset="0.605" stop-color="#c3ff67"/><stop offset="0.68" stop-color="#fffc51"/><stop offset="0.781" stop-color="#ffb81e"/><stop offset="0.874" stop-color="#ff8c00"/><stop offset="1" stop-color="#ff6100"/></linearGradient><linearGradient id="g108" gradientUnits="userSpaceOnUse" x1="362" x2="1034"><stop offset="0" stop-color="#00ffb1"/><stop offset="0.173" stop-color="#03ffa1"/><stop offset="0.363" stop-color="#4fff8b"/><stop offset="0.521" stop-color="#96ff7f"/><stop offset="0.595" stop-color="#c1ff6c"/><stop offset="0.67" stop-color="#fffe57"/><stop offset="0.75" stop-color="#ffc52c"/><stop offset="0.866" stop-color="#ff8b00"/><stop offset="1" stop-color="#ff5d00"/></linearGradient><linearGradient id="g109" gradientUnits="userSpaceOnUse" x1="363" x2="1039"><stop offset="0" stop-color="#00ffb4"/><stop offset="0.169" stop-color="#03ffa4"/><stop offset="0.352" stop-color="#4cff8f"/><stop offset="0.521" stop-color="#9aff82"/><stop offset="0.595" stop-color="#c7ff6f"/><stop offset="0.663" stop-color="#fffc5a"/><stop offset="0.751" stop-color="#ffbe2a"/><stop offset="0.861" stop-color="#ff8801"/><stop offset="1" stop-color="#ff5900"/></linearGradient><linearGradient id="g110" gradientUnits="userSpaceOnUse" x1="364" x2="1044"><stop offset="0" stop-color="#00ffb7"/><stop offset="0.168" stop-color="#03ffa7"/><stop offset="0.353" stop-color="#4fff92"/><stop offset="0.521" stop-color="#9eff85"/><stop offset="0.594" stop-color="#cdff72"/><stop offset="0.653" stop-color="#fffd60"/><stop offset="0.741" stop-color="#ffbe2e"/><stop offset="0.856" stop-color="#ff8502"/><stop offset="1" stop-color="#ff5500"/></linearGradient><linearGradient id="g111" gradientUnits="userSpaceOnUse" x1="364" x2="1048"><stop offset="0" stop-color="#00ffbb"/><stop offset="0.167" stop-color="#03ffab"/><stop offset="0.348" stop-color="#4eff96"/><stop offset="0.52" stop-color="#a2ff88"/><stop offset="0.585" stop-color="#cbff77"/><stop offset="0.646" stop-color="#fffc64"/><stop offset="0.734" stop-color="#ffbd31"/><stop offset="0.845" stop-color="#ff8505"/><stop offset="0.889" stop-color="#ff7400"/><stop offset="1" stop-color="#ff5200"/></linearGradient><linearGradient id="g112" gradientUnits="userSpaceOnUse" x1="365" x2="1051"><stop offset="0" stop-color="#00ffbe"/><stop offset="0.163" stop-color="#03ffae"/><stop offset="0.335" stop-color="#4aff9b"/><stop offset="0.472" stop-color="#8dff92"/><stop offset="0.566" stop-color="#c2ff80"/><stop offset="0.638" stop-color="#fffd6a"/><stop offset="0.72" stop-color="#ffc138"/><stop offset="0.828" stop-color="#ff880b"/><stop offset="0.872" stop-color="#ff7600"/><stop offset="1" stop-color="#ff4f00"/></linearGradient><linearGradient id="g113" gradientUnits="userSpaceOnUse" x1="365" x2="1057"><stop offset="0" stop-color="#00ffc1"/><stop offset="0.162" stop-color="#03ffb2"/><stop offset="0.335" stop-color="#4cff9e"/><stop offset="0.514" stop-color="#a7ff90"/><stop offset="0.584" stop-color="#d7ff7d"/><stop offset="0.63" stop-color="#fffc6f"/><stop offset="0.717" stop-color="#ffbc38"/><stop offset="0.827" stop-color="#ff830a"/><stop offset="0.87" stop-color="#ff7200"/><stop offset="1" stop-color="#ff4b00"/></linearGradient><linearGradient id="g114" gradientUnits="userSpaceOnUse" x1="366" x2="1060"><stop offset="0" stop-color="#00ffc4"/><stop offset="0.161" stop-color="#03ffb5"/><stop offset="0.34" stop-color="#50ffa1"/><stop offset="0.473" stop-color="#95ff99"/><stop offset="0.556" stop-color="#c6ff89"/><stop offset="0.622" stop-color="#fffd74"/><stop offset="0.709" stop-color="#ffbc3c"/><stop offset="0.824" stop-color="#ff800b"/><stop offset="0.87" stop-color="#ff6e00"/><stop offset="1" stop-color="#ff4800"/></linearGradient><linearGradient id="g115" gradientUnits="userSpaceOnUse" x1="367" x2="1065"><stop offset="0" stop-color="#00ffc8"/><stop offset="0.158" stop-color="#03ffb9"/><stop offset="0.33" stop-color="#4dffa6"/><stop offset="0.447" stop-color="#8cff9d"/><stop offset="0.521" stop-color="#b5ff96"/><stop offset="0.579" stop-color="#e0ff86"/><stop offset="0.613" stop-color="#fffe7b"/><stop offset="0.688" stop-color="#ffc447"/><stop offset="0.785" stop-color="#ff8c18"/><stop offset="0.865" stop-color="#ff6b00"/><stop offset="1" stop-color="#ff4400"/></linearGradient><linearGradient id="g116" gradientUnits="userSpaceOnUse" x1="367" x2="1069"><stop offset="0" stop-color="#00ffcb"/><stop offset="0.157" stop-color="#03ffbd"/><stop offset="0.33" stop-color="#4fffa9"/><stop offset="0.447" stop-color="#90ffa1"/><stop offset="0.521" stop-color="#b9ff9a"/><stop offset="0.578" stop-color="#e6ff8a"/><stop offset="0.607" stop-color="#fffd80"/><stop offset="0.692" stop-color="#ffbb44"/><stop offset="0.789" stop-color="#ff8617"/><stop offset="0.863" stop-color="#ff6800"/><stop offset="1" stop-color="#ff4100"/></linearGradient><linearGradient id="g117" gradientUnits="userSpaceOnUse" x1="368" x2="1074"><stop offset="0" stop-color="#00ffcf"/><stop offset="0.153" stop-color="#03ffc1"/><stop offset="0.317" stop-color="#4bffaf"/><stop offset="0.445" stop-color="#93ffa4"/><stop offset="0.51" stop-color="#b8ffa0"/><stop offset="0.569" stop-color="#e5ff90"/><stop offset="0.598" stop-color="#fffe86"/><stop offset="0.674" stop-color="#ffc14d"/><stop offset="0.765" stop-color="#ff8c1f"/><stop offset="0.858" stop-color="#ff6500"/><stop offset="1" stop-color="#ff3d00"/></linearGradient><linearGradient id="g118" gradientUnits="userSpaceOnUse" x1="369" x2="1077"><stop offset="0" stop-color="#00ffd2"/><stop offset="0.153" stop-color="#03ffc5"/><stop offset="0.328" stop-color="#52ffb1"/><stop offset="0.449" stop-color="#99ffa8"/><stop offset="0.511" stop-color="#bdffa4"/><stop offset="0.568" stop-color="#eaff94"/><stop offset="0.593" stop-color="#fffc8a"/><stop offset="0.675" stop-color="#ffbb4c"/><stop offset="0.768" stop-color="#ff861e"/><stop offset="0.859" stop-color="#ff6200"/><stop offset="1" stop-color="#ff3b00"/></linearGradient><linearGradient id="g119" gradientUnits="userSpaceOnUse" x1="369" x2="1083"><stop offset="0" stop-color="#00ffd6"/><stop offset="0.151" stop-color="#03ffc9"/><stop offset="0.319" stop-color="#50ffb6"/><stop offset="0.445" stop-color="#9bffac"/><stop offset="0.507" stop-color="#c1ffa9"/><stop offset="0.557" stop-color="#e8ff9b"/><stop offset="0.583" stop-color="#fffe92"/><stop offset="0.661" stop-color="#ffbe54"/><stop offset="0.748" stop-color="#ff8a25"/><stop offset="0.854" stop-color="#ff5e00"/><stop offset="1" stop-color="#ff3700"/></linearGradient><linearGradient id="g120" gradientUnits="userSpaceOnUse" x1="370" x2="1086"><stop offset="0" stop-color="#00ffd9"/><stop offset="0.148" stop-color="#03ffcd"/><stop offset="0.316" stop-color="#50ffbb"/><stop offset="0.439" stop-color="#9bffb0"/><stop offset="0.5" stop-color="#c1ffaf"/><stop offset="0.553" stop-color="#eaffa1"/><stop offset="0.578" stop-color="#fffc97"/><stop offset="0.654" stop-color="#ffbe58"/><stop offset="0.74" stop-color="#ff8928"/><stop offset="0.855" stop-color="#ff5b00"/><stop offset="1" stop-color="#ff3400"/></linearGradient><linearGradient id="g121" gradientUnits="userSpaceOnUse" x1="371" x2="1091"><stop offset="0" stop-color="#00ffdd"/><stop offset="0.144" stop-color="#02ffd1"/><stop offset="0.317" stop-color="#53ffbf"/><stop offset="0.433" stop-color="#9cffb4"/><stop offset="0.503" stop-color="#c9ffb3"/><stop offset="0.547" stop-color="#ecffa7"/><stop offset="0.569" stop-color="#fffc9e"/><stop offset="0.644" stop-color="#ffbe5d"/><stop offset="0.725" stop-color="#ff8c2e"/><stop offset="0.833" stop-color="#ff5d05"/><stop offset="0.875" stop-color="#ff5000"/><stop offset="1" stop-color="#ff3100"/></linearGradient><linearGradient id="g122" gradientUnits="userSpaceOnUse" x1="371" x2="1095"><stop offset="0" stop-color="#00ffe1"/><stop offset="0.144" stop-color="#02ffd5"/><stop offset="0.32" stop-color="#57ffc3"/><stop offset="0.42" stop-color="#97ffb9"/><stop offset="0.503" stop-color="#ceffb8"/><stop offset="0.547" stop-color="#f2ffac"/><stop offset="0.564" stop-color="#fffca4"/><stop offset="0.635" stop-color="#ffbf63"/><stop offset="0.713" stop-color="#ff8d33"/><stop offset="0.829" stop-color="#ff5b06"/><stop offset="0.867" stop-color="#ff4f00"/><stop offset="1" stop-color="#ff2e00"/></linearGradient><linearGradient id="g123" gradientUnits="userSpaceOnUse" x1="372" x2="1100"><stop offset="0" stop-color="#00ffe5"/><stop offset="0.143" stop-color="#03ffd9"/><stop offset="0.31" stop-color="#54ffc8"/><stop offset="0.415" stop-color="#97ffbd"/><stop offset="0.5" stop-color="#d2ffbd"/><stop offset="0.555" stop-color="#fffcab"/><stop offset="0.629" stop-color="#ffbd66"/><stop offset="0.701" stop-color="#ff8e38"/><stop offset="0.808" stop-color="#ff5e0c"/><stop offset="0.857" stop-color="#ff4e00"/><stop offset="1" stop-color="#ff2b00"/></linearGradient><linearGradient id="g124" gradientUnits="userSpaceOnUse" x1="373" x2="1103"><stop offset="0" stop-color="#00ffe9"/><stop offset="0.14" stop-color="#03ffdd"/><stop offset="0.307" stop-color="#54ffcd"/><stop offset="0.411" stop-color="#98ffc2"/><stop offset="0.49" stop-color="#d1ffc4"/><stop offset="0.537" stop-color="#f6ffb8"/><stop offset="0.551" stop-color="#fffbb0"/><stop offset="0.622" stop-color="#ffbd6b"/><stop offset="0.69" stop-color="#ff8f3d"/><stop offset="0.792" stop-color="#ff6011"/><stop offset="0.858" stop-color="#ff4a00"/><stop offset="1" stop-color="#ff2800"/></linearGradient><linearGradient id="g125" gradientUnits="userSpaceOnUse" x1="373" x2="1109"><stop offset="0" stop-color="#00ffed"/><stop offset="0.139" stop-color="#03ffe2"/><stop offset="0.293" stop-color="#4fffd3"/><stop offset="0.394" stop-color="#90ffc8"/><stop offset="0.492" stop-color="#d8ffc8"/><stop offset="0.535" stop-color="#fcffbd"/><stop offset="0.622" stop-color="#ffb568"/><stop offset="0.693" stop-color="#ff873a"/><stop offset="0.796" stop-color="#ff5a0f"/><stop offset="0.853" stop-color="#ff4700"/><stop offset="1" stop-color="#ff2500"/></linearGradient><linearGradient id="g126" gradientUnits="userSpaceOnUse" x1="374" x2="1112"><stop offset="0" stop-color="#00fff1"/><stop offset="0.138" stop-color="#03ffe6"/><stop offset="0.298" stop-color="#54ffd7"/><stop offset="0.393" stop-color="#92ffcd"/><stop offset="0.472" stop-color="#d0ffcf"/><stop offset="0.52" stop-color="#f4ffc6"/><stop offset="0.537" stop-color="#fffbbe"/><stop offset="0.612" stop-color="#ffb76f"/><stop offset="0.683" stop-color="#ff883f"/><stop offset="0.786" stop-color="#ff5912"/><stop offset="0.854" stop-color="#ff4400"/><stop offset="1" stop-color="#ff2200"/></linearGradient><linearGradient id="g127" gradientUnits="userSpaceOnUse" x1="375" x2="1117"><stop offset="0" stop-color="#00fff5"/><stop offset="0.135" stop-color="#03ffeb"/><stop offset="0.288" stop-color="#51ffdd"/><stop offset="0.391" stop-color="#95ffd2"/><stop offset="0.472" stop-color="#d6ffd4"/><stop offset="0.515" stop-color="#f6ffcc"/><stop offset="0.528" stop-color="#fffbc5"/><stop offset="0.606" stop-color="#ffb572"/><stop offset="0.677" stop-color="#ff8541"/><stop offset="0.779" stop-color="#ff5714"/><stop offset="0.852" stop-color="#ff4000"/><stop offset="1" stop-color="#ff2000"/></linearGradient><linearGradient id="g128" gradientUnits="userSpaceOnUse" x1="376" x2="1122"><stop offset="0" stop-color="#00fffa"/><stop offset="0.131" stop-color="#02fff0"/><stop offset="0.292" stop-color="#56ffe1"/><stop offset="0.389" stop-color="#98ffd8"/><stop offset="0.472" stop-color="#dcffd9"/><stop offset="0.517" stop-color="#fffecf"/><stop offset="0.606" stop-color="#ffae70"/><stop offset="0.67" stop-color="#ff8343"/><stop offset="0.772" stop-color="#ff5515"/><stop offset="0.85" stop-color="#ff3d00"/><stop offset="1" stop-color="#ff1d00"/></linearGradient><linearGradient id="g129" gradientUnits="userSpaceOnUse" x1="376" x2="1126"><stop offset="0" stop-color="#00fffe"/><stop offset="0.131" stop-color="#03fff5"/><stop offset="0.272" stop-color="#4cffe8"/><stop offset="0.368" stop-color="#8cffdf"/><stop offset="0.459" stop-color="#d8ffdd"/><stop offset="0.509" stop-color="#feffd7"/><stop offset="0.6" stop-color="#ffad74"/><stop offset="0.667" stop-color="#ff8044"/><stop offset="0.763" stop-color="#ff5519"/><stop offset="0.845" stop-color="#ff3b00"/><stop offset="1" stop-color="#ff1a00"/></linearGradient><linearGradient id="g130" gradientUnits="userSpaceOnUse" x1="377" x2="1131"><stop offset="0" stop-color="#00fbff"/><stop offset="0.13" stop-color="#03fff9"/><stop offset="0.281" stop-color="#54ffec"/><stop offset="0.377" stop-color="#97ffe3"/><stop offset="0.467" stop-color="#e3ffe3"/><stop offset="0.507" stop-color="#fffcd9"/><stop offset="0.597" stop-color="#ffa874"/><stop offset="0.666" stop-color="#ff7a43"/><stop offset="0.772" stop-color="#ff4d14"/><stop offset="0.846" stop-color="#ff3700"/><stop offset="1" stop-color="#ff1700"/></linearGradient><linearGradient id="g131" gradientUnits="userSpaceOnUse" x1="378" x2="1134"><stop offset="0" stop-color="#00f7ff"/><stop offset="0.127" stop-color="#03ffff"/><stop offset="0.267" stop-color="#4efff3"/><stop offset="0.365" stop-color="#91ffea"/><stop offset="0.466" stop-color="#e7ffe8"/><stop offset="0.5" stop-color="#fffde0"/><stop offset="0.593" stop-color="#ffa577"/><stop offset="0.656" stop-color="#ff7a48"/><stop offset="0.757" stop-color="#ff4e1a"/><stop offset="0.847" stop-color="#ff3400"/><stop offset="1" stop-color="#ff1500"/></linearGradient><linearGradient id="g132" gradientUnits="userSpaceOnUse" x1="379" x2="1139"><stop offset="0" stop-color="#00f2ff"/><stop offset="0.126" stop-color="#03faff"/><stop offset="0.253" stop-color="#48fffa"/><stop offset="0.353" stop-color="#8cfff0"/><stop offset="0.463" stop-color="#ebffec"/><stop offset="0.492" stop-color="#fffde6"/><stop offset="0.589" stop-color="#ffa177"/><stop offset="0.65" stop-color="#ff784a"/><stop offset="0.75" stop-color="#ff4c1b"/><stop offset="0.845" stop-color="#ff3100"/><stop offset="1" stop-color="#ff1200"/></linearGradient><linearGradient id="g133" gradientUnits="userSpaceOnUse" x1="380" x2="1144"><stop offset="0" stop-color="#00eeff"/><stop offset="0.123" stop-color="#03f5ff"/><stop offset="0.246" stop-color="#46feff"/><stop offset="0.346" stop-color="#8bfff6"/><stop offset="0.461" stop-color="#eefff0"/><stop offset="0.487" stop-color="#fffcea"/><stop offset="0.584" stop-color="#ff9e79"/><stop offset="0.644" stop-color="#ff754c"/><stop offset="0.743" stop-color="#ff4a1d"/><stop offset="0.843" stop-color="#ff2d00"/><stop offset="1" stop-color="#ff1000"/></linearGradient><linearGradient id="g134" gradientUnits="userSpaceOnUse" x1="380" x2="1148"><stop offset="0" stop-color="#00eaff"/><stop offset="0.122" stop-color="#03f0ff"/><stop offset="0.247" stop-color="#47f9ff"/><stop offset="0.344" stop-color="#8cfffd"/><stop offset="0.456" stop-color="#effff5"/><stop offset="0.479" stop-color="#fffdf1"/><stop offset="0.578" stop-color="#ff9c7d"/><stop offset="0.641" stop-color="#ff724d"/><stop offset="0.742" stop-color="#ff461d"/><stop offset="0.841" stop-color="#ff2b00"/><stop offset="1" stop-color="#ff0d00"/></linearGradient><linearGradient id="g135" gradientUnits="userSpaceOnUse" x1="381" x2="1153"><stop offset="0" stop-color="#00e5ff"/><stop offset="0.122" stop-color="#03ebff"/><stop offset="0.251" stop-color="#4af3ff"/><stop offset="0.345" stop-color="#8ffbff"/><stop offset="0.443" stop-color="#ebfffa"/><stop offset="0.472" stop-color="#fffef7"/><stop offset="0.573" stop-color="#ff997f"/><stop offset="0.637" stop-color="#ff6d4e"/><stop offset="0.731" stop-color="#ff4621"/><stop offset="0.839" stop-color="#ff2800"/><stop offset="1" stop-color="#ff0b00"/></linearGradient><linearGradient id="g136" gradientUnits="userSpaceOnUse" x1="382" x2="1156"><stop offset="0" stop-color="#00e1ff"/><stop offset="0.119" stop-color="#03e6ff"/><stop offset="0.243" stop-color="#45edff"/><stop offset="0.336" stop-color="#88f4ff"/><stop offset="0.45" stop-color="#f4ffff"/><stop offset="0.468" stop-color="#fffcfa"/><stop offset="0.566" stop-color="#ff9884"/><stop offset="0.628" stop-color="#ff6d53"/><stop offset="0.721" stop-color="#ff4625"/><stop offset="0.837" stop-color="#ff2500"/><stop offset="1" stop-color="#ff0900"/></linearGradient><linearGradient id="g137" gradientUnits="userSpaceOnUse" x1="383" x2="1161"><stop offset="0" stop-color="#00ddff"/><stop offset="0.118" stop-color="#03e2ff"/><stop offset="0.249" stop-color="#4ae8ff"/><stop offset="0.337" stop-color="#8aeeff"/><stop offset="0.45" stop-color="#f5faff"/><stop offset="0.463" stop-color="#fffafd"/><stop offset="0.563" stop-color="#ff9284"/><stop offset="0.63" stop-color="#ff6650"/><stop offset="0.733" stop-color="#ff3d1f"/><stop offset="0.841" stop-color="#ff2100"/><stop offset="1" stop-color="#ff0600"/></linearGradient><linearGradient id="g138" gradientUnits="userSpaceOnUse" x1="384" x2="1166"><stop offset="0" stop-color="#00d9ff"/><stop offset="0.115" stop-color="#03ddff"/><stop offset="0.24" stop-color="#45e2ff"/><stop offset="0.332" stop-color="#87e8ff"/><stop offset="0.46" stop-color="#fff6fd"/><stop offset="0.552" stop-color="#ff948c"/><stop offset="0.609" stop-color="#ff6c5d"/><stop offset="0.691" stop-color="#ff4730"/><stop offset="0.808" stop-color="#ff2506"/><stop offset="0.854" stop-color="#ff1b00"/><stop offset="1" stop-color="#ff0400"/></linearGradient><linearGradient id="g139" gradientUnits="userSpaceOnUse" x1="385" x2="1169"><stop offset="0" stop-color="#00d5ff"/><stop offset="0.115" stop-color="#03d8ff"/><stop offset="0.242" stop-color="#47ddff"/><stop offset="0.332" stop-color="#86e2ff"/><stop offset="0.459" stop-color="#fff1fe"/><stop offset="0.551" stop-color="#ff8f8d"/><stop offset="0.607" stop-color="#ff685d"/><stop offset="0.691" stop-color="#ff4330"/><stop offset="0.806" stop-color="#ff2307"/><stop offset="0.849" stop-color="#ff1a00"/><stop offset="1" stop-color="#ff0200"/></linearGradient><linearGradient id="g140" gradientUnits="userSpaceOnUse" x1="385" x2="1173"><stop offset="0" stop-color="#00d1ff"/><stop offset="0.114" stop-color="#03d4ff"/><stop offset="0.246" stop-color="#49d8ff"/><stop offset="0.338" stop-color="#8bddff"/><stop offset="0.457" stop-color="#ffeeff"/><stop offset="0.551" stop-color="#ff898c"/><stop offset="0.607" stop-color="#ff635d"/><stop offset="0.693" stop-color="#ff3f2f"/><stop offset="0.81" stop-color="#ff1f06"/><stop offset="0.855" stop-color="#ff1600"/><stop offset="1" stop-color="#ff0000"/></linearGradient><linearGradient id="g141" gradientUnits="userSpaceOnUse" x1="386" x2="1178"><stop offset="0" stop-color="#00cdff"/><stop offset="0.111" stop-color="#03cfff"/><stop offset="0.235" stop-color="#43d2ff"/><stop offset="0.328" stop-color="#84d6ff"/><stop offset="0.452" stop-color="#fce8ff"/><stop offset="0.47" stop-color="#ffdaee"/><stop offset="0.543" stop-color="#ff8a93"/><stop offset="0.593" stop-color="#ff6565"/><stop offset="0.679" stop-color="#ff3f34"/><stop offset="0.798" stop-color="#ff1f09"/><stop offset="0.846" stop-color="#ff1500"/><stop offset="0.997" stop-color="#ff0000"/><stop offset="1" stop-color="#ff0000"/></linearGradient><linearGradient id="g142" gradientUnits="userSpaceOnUse" x1="387" x2="1181"><stop offset="0" stop-color="#00c9ff"/><stop offset="0.111" stop-color="#03cbff"/><stop offset="0.249" stop-color="#4cceff"/><stop offset="0.34" stop-color="#8ed2ff"/><stop offset="0.451" stop-color="#fce3ff"/><stop offset="0.471" stop-color="#ffd3eb"/><stop offset="0.544" stop-color="#ff8491"/><stop offset="0.599" stop-color="#ff5e61"/><stop offset="0.683" stop-color="#ff3b33"/><stop offset="0.798" stop-color="#ff1c09"/><stop offset="0.851" stop-color="#ff1100"/><stop offset="0.985" stop-color="#ff0000"/><stop offset="1" stop-color="#ff0000"/></linearGradient><linearGradient id="g143" gradientUnits="userSpaceOnUse" x1="388" x2="1186"><stop offset="0" stop-color="#00c5ff"/><stop offset="0.108" stop-color="#03c6ff"/><stop offset="0.238" stop-color="#46c8ff"/><stop offset="0.331" stop-color="#87ccff"/><stop offset="0.441" stop-color="#f3dcff"/><stop offset="0.454" stop-color="#ffddfd"/><stop offset="0.544" stop-color="#ff7e8f"/><stop offset="0.602" stop-color="#ff585f"/><stop offset="0.684" stop-color="#ff3632"/><stop offset="0.805" stop-color="#ff1707"/><stop offset="0.852" stop-color="#ff0e00"/><stop offset="0.97" stop-color="#ff0000"/><stop offset="1" stop-color="#ff0000"/></linearGradient><linearGradient id="g144" gradientUnits="userSpaceOnUse" x1="389" x2="1191"><stop offset="0" stop-color="#00c1ff"/><stop offset="0.107" stop-color="#03c2ff"/><stop offset="0.242" stop-color="#49c4ff"/><stop offset="0.332" stop-color="#89c6ff"/><stop offset="0.431" stop-color="#ead5ff"/><stop offset="0.451" stop-color="#ffd7fd"/><stop offset="0.541" stop-color="#ff7b91"/><stop offset="0.599" stop-color="#ff5560"/><stop offset="0.681" stop-color="#ff3433"/><stop offset="0.8" stop-color="#ff1508"/><stop offset="0.848" stop-color="#ff0d00"/><stop offset="0.95" stop-color="#ff0000"/><stop offset="1" stop-color="#ff0000"/></linearGradient><linearGradient id="g145" gradientUnits="userSpaceOnUse" x1="390" x2="1194"><stop offset="0" stop-color="#00bdff"/><stop offset="0.104" stop-color="#03beff"/><stop offset="0.236" stop-color="#46bfff"/><stop offset="0.331" stop-color="#88c1ff"/><stop offset="0.423" stop-color="#e1ceff"/><stop offset="0.45" stop-color="#ffd2fd"/><stop offset="0.542" stop-color="#ff758f"/><stop offset="0.609" stop-color="#ff4c59"/><stop offset="0.704" stop-color="#ff2a29"/><stop offset="0.833" stop-color="#ff0d00"/><stop offset="0.935" stop-color="#ff0000"/><stop offset="1" stop-color="#ff0000"/></linearGradient><linearGradient id="g146" gradientUnits="userSpaceOnUse" x1="391" x2="1199"><stop offset="0" stop-color="#00baff"/><stop offset="0.104" stop-color="#03baff"/><stop offset="0.238" stop-color="#48baff"/><stop offset="0.327" stop-color="#86bcff"/><stop offset="0.413" stop-color="#d8c8ff"/><stop offset="0.448" stop-color="#ffcdfd"/><stop offset="0.535" stop-color="#ff7695"/><stop offset="0.594" stop-color="#ff4f63"/><stop offset="0.676" stop-color="#ff2f35"/><stop offset="0.795" stop-color="#ff110a"/><stop offset="0.847" stop-color="#ff0800"/><stop offset="0.926" stop-color="#ff0000"/><stop offset="1" stop-color="#ff0000"/></linearGradient><linearGradient id="g147" gradientUnits="userSpaceOnUse" x1="392" x2="1202"><stop offset="0" stop-color="#00b6ff"/><stop offset="0.101" stop-color="#03b6ff"/><stop offset="0.232" stop-color="#45b5ff"/><stop offset="0.328" stop-color="#87b7ff"/><stop offset="0.407" stop-color="#d2c1ff"/><stop offset="0.447" stop-color="#ffc7fd"/><stop offset="0.533" stop-color="#ff7396"/><stop offset="0.593" stop-color="#ff4d64"/><stop offset="0.677" stop-color="#ff2c35"/><stop offset="0.795" stop-color="#ff0f0a"/><stop offset="0.849" stop-color="#ff0500"/><stop offset="0.928" stop-color="#ff0000"/><stop offset="1" stop-color="#ff0000"/></linearGradient><linearGradient id="g148" gradientUnits="userSpaceOnUse" x1="393" x2="1207"><stop offset="0" stop-color="#00b2ff"/><stop offset="0.101" stop-color="#03b2ff"/><stop offset="0.236" stop-color="#48b1ff"/><stop offset="0.327" stop-color="#87b2ff"/><stop offset="0.398" stop-color="#c9baff"/><stop offset="0.445" stop-color="#ffc1fd"/><stop offset="0.528" stop-color="#ff7199"/><stop offset="0.597" stop-color="#ff4760"/><stop offset="0.686" stop-color="#ff2631"/><stop offset="0.806" stop-color="#ff0a07"/><stop offset="0.853" stop-color="#ff0200"/><stop offset="1" stop-color="#ff0000"/></linearGradient><linearGradient id="g149" gradientUnits="userSpaceOnUse" x1="394" x2="1210"><stop offset="0" stop-color="#00afff"/><stop offset="0.098" stop-color="#03aeff"/><stop offset="0.228" stop-color="#44acff"/><stop offset="0.326" stop-color="#86aeff"/><stop offset="0.392" stop-color="#c3b4ff"/><stop offset="0.444" stop-color="#ffbbfd"/><stop offset="0.527" stop-color="#ff6e9a"/><stop offset="0.598" stop-color="#ff4360"/><stop offset="0.686" stop-color="#ff2331"/><stop offset="0.804" stop-color="#ff0808"/><stop offset="0.853" stop-color="#ff0000"/><stop offset="1" stop-color="#ff0000"/></linearGradient><linearGradient id="g150" gradientUnits="userSpaceOnUse" x1="394" x2="1214"><stop offset="0" stop-color="#00abff"/><stop offset="0.098" stop-color="#03aaff"/><stop offset="0.232" stop-color="#46a8ff"/><stop offset="0.334" stop-color="#8ca9ff"/><stop offset="0.393" stop-color="#c4afff"/><stop offset="0.441" stop-color="#ffb7ff"/><stop offset="0.524" stop-color="#ff6b9c"/><stop offset="0.595" stop-color="#ff4162"/><stop offset="0.69" stop-color="#ff1f2f"/><stop offset="0.82" stop-color="#ff0304"/><stop offset="0.888" stop-color="#ff0000"/><stop offset="1" stop-color="#ff0000"/></linearGradient><linearGradient id="g151" gradientUnits="userSpaceOnUse" x1="395" x2="1219"><stop offset="0" stop-color="#00a8ff"/><stop offset="0.095" stop-color="#02a6ff"/><stop offset="0.235" stop-color="#49a4ff"/><stop offset="0.333" stop-color="#8ca5ff"/><stop offset="0.383" stop-color="#bba8ff"/><stop offset="0.442" stop-color="#ffaffc"/><stop offset="0.517" stop-color="#ff6ca2"/><stop offset="0.58" stop-color="#ff456c"/><stop offset="0.66" stop-color="#ff253d"/><stop offset="0.769" stop-color="#ff0a12"/><stop offset="0.847" stop-color="#ff0000"/><stop offset="1" stop-color="#ff0000"/></linearGradient><linearGradient id="g152" gradientUnits="userSpaceOnUse" x1="396" x2="1224"><stop offset="0" stop-color="#00a4ff"/><stop offset="0.094" stop-color="#03a3ff"/><stop offset="0.227" stop-color="#45a0ff"/><stop offset="0.329" stop-color="#89a0ff"/><stop offset="0.379" stop-color="#b8a3ff"/><stop offset="0.44" stop-color="#ffa9fc"/><stop offset="0.517" stop-color="#ff66a0"/><stop offset="0.587" stop-color="#ff3e66"/><stop offset="0.676" stop-color="#ff1d35"/><stop offset="0.79" stop-color="#ff040c"/><stop offset="0.85" stop-color="#ff0000"/><stop offset="1" stop-color="#ff0000"/></linearGradient><linearGradient id="g153" gradientUnits="userSpaceOnUse" x1="397" x2="1227"><stop offset="0" stop-color="#00a1ff"/><stop offset="0.092" stop-color="#039fff"/><stop offset="0.227" stop-color="#459cff"/><stop offset="0.333" stop-color="#8c9cff"/><stop offset="0.386" stop-color="#c09eff"/><stop offset="0.439" stop-color="#ffa3fc"/><stop offset="0.516" stop-color="#ff63a1"/><stop offset="0.583" stop-color="#ff3d69"/><stop offset="0.677" stop-color="#ff1b35"/><stop offset="0.798" stop-color="#ff000a"/><stop offset="0.851" stop-color="#ff0000"/><stop offset="1" stop-color="#ff0000"/></linearGradient><linearGradient id="g154" gradientUnits="userSpaceOnUse" x1="398" x2="1224"><stop offset="0" stop-color="#009eff"/><stop offset="0.092" stop-color="#039bff"/><stop offset="0.232" stop-color="#4898ff"/><stop offset="0.339" stop-color="#8f97ff"/><stop offset="0.397" stop-color="#cb9aff"/><stop offset="0.441" stop-color="#ff9dfc"/><stop offset="0.521" stop-color="#ff5e9f"/><stop offset="0.593" stop-color="#ff3765"/><stop offset="0.688" stop-color="#ff1733"/><stop offset="0.804" stop-color="#ff000b"/><stop offset="0.86" stop-color="#ff0000"/><stop offset="1" stop-color="#ff0000"/></linearGradient><linearGradient id="g155" gradientUnits="userSpaceOnUse" x1="399" x2="1227"><stop offset="0" stop-color="#009aff"/><stop offset="0.089" stop-color="#0398ff"/><stop offset="0.225" stop-color="#4494ff"/><stop offset="0.331" stop-color="#8992ff"/><stop offset="0.384" stop-color="#bd94ff"/><stop offset="0.44" stop-color="#ff98fc"/><stop offset="0.514" stop-color="#ff5da5"/><stop offset="0.585" stop-color="#ff386b"/><stop offset="0.681" stop-color="#ff1636"/><stop offset="0.792" stop-color="#ff000f"/><stop offset="0.857" stop-color="#ff0000"/><stop offset="1" stop-color="#ff0000"/></linearGradient><linearGradient id="g156" gradientUnits="userSpaceOnUse" x1="400" x2="1228"><stop offset="0" stop-color="#0097ff"/><stop offset="0.089" stop-color="#0395ff"/><stop offset="0.237" stop-color="#4b90ff"/><stop offset="0.336" stop-color="#8c8eff"/><stop offset="0.396" stop-color="#cb90ff"/><stop offset="0.44" stop-color="#ff92fc"/><stop offset="0.517" stop-color="#ff59a3"/><stop offset="0.585" stop-color="#ff366c"/><stop offset="0.674" stop-color="#ff163b"/><stop offset="0.785" stop-color="#ff0012"/><stop offset="0.862" stop-color="#ff0000"/><stop offset="1" stop-color="#ff0000"/></linearGradient><linearGradient id="g157" gradientUnits="userSpaceOnUse" x1="401" x2="1223"><stop offset="0" stop-color="#0094ff"/><stop offset="0.088" stop-color="#0391ff"/><stop offset="0.231" stop-color="#478cff"/><stop offset="0.333" stop-color="#8889ff"/><stop offset="0.389" stop-color="#c08aff"/><stop offset="0.443" stop-color="#ff8dfc"/><stop offset="0.521" stop-color="#ff55a4"/><stop offset="0.589" stop-color="#ff336d"/><stop offset="0.691" stop-color="#ff1136"/><stop offset="0.783" stop-color="#ff0015"/><stop offset="0.871" stop-color="#ff0000"/><stop offset="1" stop-color="#ff0000"/></linearGradient><linearGradient id="g158" gradientUnits="userSpaceOnUse" x1="402" x2="1228"><stop offset="0" stop-color="#0091ff"/><stop offset="0.087" stop-color="#038eff"/><stop offset="0.235" stop-color="#4a88ff"/><stop offset="0.329" stop-color="#8685ff"/><stop offset="0.385" stop-color="#bd85ff"/><stop offset="0.441" stop-color="#ff88fc"/><stop offset="0.518" stop-color="#ff52a5"/><stop offset="0.584" stop-color="#ff3270"/><stop offset="0.678" stop-color="#ff123c"/><stop offset="0.77" stop-color="#ff0019"/><stop offset="0.869" stop-color="#ff0000"/><stop offset="1" stop-color="#ff0000"/></linearGradient><linearGradient id="g159" gradientUnits="userSpaceOnUse" x1="403" x2="1223"><stop offset="0" stop-color="#008eff"/><stop offset="0.085" stop-color="#038bff"/><stop offset="0.229" stop-color="#4685ff"/><stop offset="0.329" stop-color="#8481ff"/><stop offset="0.388" stop-color="#bd81ff"/><stop offset="0.444" stop-color="#ff83fd"/><stop offset="0.515" stop-color="#ff53ad"/><stop offset="0.59" stop-color="#ff2f6f"/><stop offset="0.688" stop-color="#ff0f3b"/><stop offset="0.768" stop-color="#ff001c"/><stop offset="0.88" stop-color="#ff0000"/><stop offset="1" stop-color="#ff0000"/></linearGradient><linearGradient id="g160" gradientUnits="userSpaceOnUse" x1="404" x2="1214"><stop offset="0" stop-color="#008bff"/><stop offset="0.084" stop-color="#0388ff"/><stop offset="0.232" stop-color="#4682ff"/><stop offset="0.331" stop-color="#827dff"/><stop offset="0.395" stop-color="#c07cff"/><stop offset="0.449" stop-color="#ff7efd"/><stop offset="0.523" stop-color="#ff4eab"/><stop offset="0.598" stop-color="#ff2d70"/><stop offset="0.696" stop-color="#ff0d3c"/><stop offset="0.773" stop-color="#ff001f"/><stop offset="0.891" stop-color="#ff0000"/><stop offset="1" stop-color="#ff0000"/></linearGradient><linearGradient id="g161" gradientUnits="userSpaceOnUse" x1="405" x2="1203"><stop offset="0" stop-color="#0088ff"/><stop offset="0.085" stop-color="#0384ff"/><stop offset="0.243" stop-color="#4a7eff"/><stop offset="0.336" stop-color="#8279ff"/><stop offset="0.404" stop-color="#c378ff"/><stop offset="0.456" stop-color="#ff79fd"/><stop offset="0.531" stop-color="#ff4bac"/><stop offset="0.607" stop-color="#ff2a71"/><stop offset="0.707" stop-color="#ff0c3d"/><stop offset="0.777" stop-color="#ff0022"/><stop offset="0.91" stop-color="#ff0000"/><stop offset="1" stop-color="#ff0000"/></linearGradient><linearGradient id="g162" gradientUnits="userSpaceOnUse" x1="406" x2="1194"><stop offset="0" stop-color="#0085ff"/><stop offset="0.084" stop-color="#0381ff"/><stop offset="0.236" stop-color="#457bff"/><stop offset="0.335" stop-color="#7e75ff"/><stop offset="0.406" stop-color="#c073ff"/><stop offset="0.462" stop-color="#ff74fd"/><stop offset="0.538" stop-color="#ff48ad"/><stop offset="0.614" stop-color="#ff2872"/><stop offset="0.716" stop-color="#ff0a3e"/><stop offset="0.779" stop-color="#ff0026"/><stop offset="0.924" stop-color="#ff0000"/><stop offset="1" stop-color="#ff0000"/></linearGradient><linearGradient id="g163" gradientUnits="userSpaceOnUse" x1="407" x2="1185"><stop offset="0" stop-color="#0082ff"/><stop offset="0.085" stop-color="#037eff"/><stop offset="0.249" stop-color="#4a77ff"/><stop offset="0.339" stop-color="#7f71ff"/><stop offset="0.409" stop-color="#be6fff"/><stop offset="0.468" stop-color="#ff70fd"/><stop offset="0.542" stop-color="#ff46b0"/><stop offset="0.622" stop-color="#ff2673"/><stop offset="0.725" stop-color="#ff083f"/><stop offset="0.787" stop-color="#ff0028"/><stop offset="0.936" stop-color="#ff0000"/><stop offset="1" stop-color="#ff0000"/></linearGradient><linearGradient id="g164" gradientUnits="userSpaceOnUse" x1="408" x2="1176"><stop offset="0" stop-color="#007fff"/><stop offset="0.083" stop-color="#037bff"/><stop offset="0.253" stop-color="#4a74ff"/><stop offset="0.344" stop-color="#7f6dff"/><stop offset="0.417" stop-color="#c16bff"/><stop offset="0.474" stop-color="#ff6bfd"/><stop offset="0.552" stop-color="#ff41ae"/><stop offset="0.63" stop-color="#ff2374"/><stop offset="0.734" stop-color="#ff0740"/><stop offset="0.789" stop-color="#ff002b"/><stop offset="0.951" stop-color="#ff0000"/><stop offset="1" stop-color="#ff0000"/></linearGradient><linearGradient id="g165" gradientUnits="userSpaceOnUse" x1="410" x2="1166"><stop offset="0" stop-color="#007cff"/><stop offset="0.082" stop-color="#0379ff"/><stop offset="0.249" stop-color="#4771ff"/><stop offset="0.339" stop-color="#796aff"/><stop offset="0.41" stop-color="#b567ff"/><stop offset="0.481" stop-color="#ff66fc"/><stop offset="0.558" stop-color="#ff3fb0"/><stop offset="0.632" stop-color="#ff2379"/><stop offset="0.735" stop-color="#ff0745"/><stop offset="0.791" stop-color="#ff0030"/><stop offset="0.939" stop-color="#ff0006"/><stop offset="0.997" stop-color="#ff0000"/><stop offset="1" stop-color="#ff0000"/></linearGradient><linearGradient id="g166" gradientUnits="userSpaceOnUse" x1="411" x2="1157"><stop offset="0" stop-color="#0079ff"/><stop offset="0.08" stop-color="#0376ff"/><stop offset="0.252" stop-color="#476eff"/><stop offset="0.343" stop-color="#7967ff"/><stop offset="0.418" stop-color="#b863ff"/><stop offset="0.488" stop-color="#ff62fc"/><stop offset="0.566" stop-color="#ff3cb1"/><stop offset="0.643" stop-color="#ff2078"/><stop offset="0.756" stop-color="#ff0341"/><stop offset="0.901" stop-color="#ff0013"/><stop offset="1" stop-color="#ff0000"/></linearGradient><linearGradient id="g167" gradientUnits="userSpaceOnUse" x1="412" x2="1148"><stop offset="0" stop-color="#0077ff"/><stop offset="0.082" stop-color="#0373ff"/><stop offset="0.266" stop-color="#4c6aff"/><stop offset="0.356" stop-color="#7f62ff"/><stop offset="0.44" stop-color="#c85fff"/><stop offset="0.495" stop-color="#ff5efc"/><stop offset="0.576" stop-color="#ff38af"/><stop offset="0.658" stop-color="#ff1c76"/><stop offset="0.766" stop-color="#ff0142"/><stop offset="0.913" stop-color="#ff0014"/><stop offset="1" stop-color="#ff0001"/></linearGradient><linearGradient id="g168" gradientUnits="userSpaceOnUse" x1="413" x2="1139"><stop offset="0" stop-color="#0074ff"/><stop offset="0.08" stop-color="#0370ff"/><stop offset="0.259" stop-color="#4767ff"/><stop offset="0.353" stop-color="#7a60ff"/><stop offset="0.435" stop-color="#be5bff"/><stop offset="0.501" stop-color="#ff5afc"/><stop offset="0.581" stop-color="#ff36b2"/><stop offset="0.669" stop-color="#ff1975"/><stop offset="0.782" stop-color="#ff0041"/><stop offset="0.937" stop-color="#ff0012"/><stop offset="1" stop-color="#ff0005"/></linearGradient><linearGradient id="g169" gradientUnits="userSpaceOnUse" x1="414" x2="1130"><stop offset="0" stop-color="#0071ff"/><stop offset="0.081" stop-color="#036dff"/><stop offset="0.274" stop-color="#4c63ff"/><stop offset="0.355" stop-color="#795cff"/><stop offset="0.436" stop-color="#b958ff"/><stop offset="0.508" stop-color="#ff56fc"/><stop offset="0.598" stop-color="#ff30ac"/><stop offset="0.69" stop-color="#ff1470"/><stop offset="0.791" stop-color="#ff0043"/><stop offset="0.941" stop-color="#ff0015"/><stop offset="1" stop-color="#ff0008"/></linearGradient><linearGradient id="g170" gradientUnits="userSpaceOnUse" x1="415" x2="1119"><stop offset="0" stop-color="#006fff"/><stop offset="0.08" stop-color="#036bff"/><stop offset="0.278" stop-color="#4c60ff"/><stop offset="0.366" stop-color="#7d58ff"/><stop offset="0.452" stop-color="#c154ff"/><stop offset="0.517" stop-color="#ff52fc"/><stop offset="0.605" stop-color="#ff2eaf"/><stop offset="0.699" stop-color="#ff1272"/><stop offset="0.795" stop-color="#ff0047"/><stop offset="0.949" stop-color="#ff0018"/><stop offset="1" stop-color="#ff000d"/></linearGradient><linearGradient id="g171" gradientUnits="userSpaceOnUse" x1="416" x2="1110"><stop offset="0" stop-color="#006cff"/><stop offset="0.081" stop-color="#0368ff"/><stop offset="0.28" stop-color="#4b5dff"/><stop offset="0.366" stop-color="#7a56ff"/><stop offset="0.458" stop-color="#c151ff"/><stop offset="0.524" stop-color="#ff4efd"/><stop offset="0.611" stop-color="#ff2cb2"/><stop offset="0.703" stop-color="#ff1276"/><stop offset="0.798" stop-color="#ff004b"/><stop offset="0.954" stop-color="#ff001b"/><stop offset="1" stop-color="#ff0011"/></linearGradient><linearGradient id="g172" gradientUnits="userSpaceOnUse" x1="418" x2="1102"><stop offset="0" stop-color="#0069ff"/><stop offset="0.079" stop-color="#0365ff"/><stop offset="0.275" stop-color="#485bff"/><stop offset="0.371" stop-color="#7b52ff"/><stop offset="0.465" stop-color="#c34dff"/><stop offset="0.529" stop-color="#ff4afe"/><stop offset="0.614" stop-color="#ff2ab6"/><stop offset="0.705" stop-color="#ff117b"/><stop offset="0.798" stop-color="#ff0050"/><stop offset="0.953" stop-color="#ff001f"/><stop offset="1" stop-color="#ff0014"/></linearGradient><linearGradient id="g173" gradientUnits="userSpaceOnUse" x1="419" x2="1091"><stop offset="0" stop-color="#0067ff"/><stop offset="0.077" stop-color="#0363ff"/><stop offset="0.277" stop-color="#4758ff"/><stop offset="0.369" stop-color="#7650ff"/><stop offset="0.467" stop-color="#be4aff"/><stop offset="0.539" stop-color="#ff47fe"/><stop offset="0.628" stop-color="#ff27b4"/><stop offset="0.726" stop-color="#ff0d77"/><stop offset="0.807" stop-color="#ff0053"/><stop offset="0.958" stop-color="#ff0023"/><stop offset="1" stop-color="#ff0019"/></linearGradient><linearGradient id="g174" gradientUnits="userSpaceOnUse" x1="420" x2="1082"><stop offset="0" stop-color="#0064ff"/><stop offset="0.076" stop-color="#0361ff"/><stop offset="0.281" stop-color="#4755ff"/><stop offset="0.375" stop-color="#774cff"/><stop offset="0.471" stop-color="#bc46ff"/><stop offset="0.547" stop-color="#ff43fe"/><stop offset="0.634" stop-color="#ff25b7"/><stop offset="0.731" stop-color="#ff0c7b"/><stop offset="0.81" stop-color="#ff0058"/><stop offset="0.964" stop-color="#ff0026"/><stop offset="1" stop-color="#ff001e"/></linearGradient><linearGradient id="g175" gradientUnits="userSpaceOnUse" x1="421" x2="1073"><stop offset="0" stop-color="#0062ff"/><stop offset="0.077" stop-color="#035eff"/><stop offset="0.291" stop-color="#4a52ff"/><stop offset="0.39" stop-color="#7d48ff"/><stop offset="0.494" stop-color="#c942ff"/><stop offset="0.555" stop-color="#ff3ffe"/><stop offset="0.65" stop-color="#ff20b3"/><stop offset="0.758" stop-color="#ff0774"/><stop offset="0.816" stop-color="#ff005b"/><stop offset="0.979" stop-color="#ff0027"/><stop offset="1" stop-color="#ff0022"/></linearGradient><linearGradient id="g176" gradientUnits="userSpaceOnUse" x1="422" x2="1064"><stop offset="0" stop-color="#005fff"/><stop offset="0.075" stop-color="#035cff"/><stop offset="0.293" stop-color="#494fff"/><stop offset="0.389" stop-color="#7a46ff"/><stop offset="0.489" stop-color="#bf40ff"/><stop offset="0.564" stop-color="#ff3cff"/><stop offset="0.648" stop-color="#ff21bc"/><stop offset="0.757" stop-color="#ff077b"/><stop offset="0.822" stop-color="#ff005e"/><stop offset="0.981" stop-color="#ff002b"/><stop offset="1" stop-color="#ff0027"/></linearGradient><linearGradient id="g177" gradientUnits="userSpaceOnUse" x1="424" x2="1054"><stop offset="0" stop-color="#005dff"/><stop offset="0.073" stop-color="#0359ff"/><stop offset="0.298" stop-color="#4a4cff"/><stop offset="0.403" stop-color="#7f42ff"/><stop offset="0.514" stop-color="#cd3cff"/><stop offset="0.575" stop-color="#ff37fd"/><stop offset="0.673" stop-color="#ff1ab3"/><stop offset="0.79" stop-color="#ff0172"/><stop offset="0.93" stop-color="#ff003f"/><stop offset="1" stop-color="#ff002c"/></linearGradient><linearGradient id="g178" gradientUnits="userSpaceOnUse" x1="425" x2="1045"><stop offset="0" stop-color="#005bff"/><stop offset="0.074" stop-color="#0357ff"/><stop offset="0.3" stop-color="#4949ff"/><stop offset="0.406" stop-color="#7e3fff"/><stop offset="0.513" stop-color="#c639ff"/><stop offset="0.584" stop-color="#ff34fd"/><stop offset="0.681" stop-color="#ff18b6"/><stop offset="0.79" stop-color="#ff0179"/><stop offset="0.919" stop-color="#ff0048"/><stop offset="1" stop-color="#ff0031"/></linearGradient><linearGradient id="g179" gradientUnits="userSpaceOnUse" x1="426" x2="1036"><stop offset="0" stop-color="#0058ff"/><stop offset="0.072" stop-color="#0355ff"/><stop offset="0.275" stop-color="#3f49ff"/><stop offset="0.384" stop-color="#6e3fff"/><stop offset="0.498" stop-color="#b537ff"/><stop offset="0.593" stop-color="#ff30fd"/><stop offset="0.702" stop-color="#ff13b0"/><stop offset="0.813" stop-color="#ff0076"/><stop offset="0.951" stop-color="#ff0043"/><stop offset="1" stop-color="#ff0036"/></linearGradient><linearGradient id="g180" gradientUnits="userSpaceOnUse" x1="428" x2="1026"><stop offset="0" stop-color="#0056ff"/><stop offset="0.07" stop-color="#0352ff"/><stop offset="0.281" stop-color="#3f46ff"/><stop offset="0.401" stop-color="#753bff"/><stop offset="0.518" stop-color="#be33ff"/><stop offset="0.605" stop-color="#ff2cfc"/><stop offset="0.706" stop-color="#ff13b6"/><stop offset="0.813" stop-color="#ff007d"/><stop offset="0.946" stop-color="#ff004b"/><stop offset="1" stop-color="#ff003b"/></linearGradient><linearGradient id="g181" gradientUnits="userSpaceOnUse" x1="429" x2="1017"><stop offset="0" stop-color="#0053ff"/><stop offset="0.071" stop-color="#0350ff"/><stop offset="0.289" stop-color="#4143ff"/><stop offset="0.405" stop-color="#7438ff"/><stop offset="0.517" stop-color="#b730ff"/><stop offset="0.616" stop-color="#ff29fc"/><stop offset="0.724" stop-color="#ff0fb2"/><stop offset="0.816" stop-color="#ff0082"/><stop offset="0.952" stop-color="#ff004f"/><stop offset="1" stop-color="#ff0041"/></linearGradient><linearGradient id="g182" gradientUnits="userSpaceOnUse" x1="430" x2="1008"><stop offset="0" stop-color="#0051ff"/><stop offset="0.069" stop-color="#034eff"/><stop offset="0.277" stop-color="#3b42ff"/><stop offset="0.401" stop-color="#6f36ff"/><stop offset="0.533" stop-color="#bc2dff"/><stop offset="0.626" stop-color="#ff26fc"/><stop offset="0.734" stop-color="#ff0db5"/><stop offset="0.817" stop-color="#ff008a"/><stop offset="0.948" stop-color="#ff0056"/><stop offset="1" stop-color="#ff0046"/></linearGradient><linearGradient id="g183" gradientUnits="userSpaceOnUse" x1="432" x2="998"><stop offset="0" stop-color="#004fff"/><stop offset="0.071" stop-color="#044cff"/><stop offset="0.283" stop-color="#3c3fff"/><stop offset="0.406" stop-color="#6f34ff"/><stop offset="0.537" stop-color="#b92aff"/><stop offset="0.636" stop-color="#ff23fe"/><stop offset="0.749" stop-color="#ff0ab4"/><stop offset="0.823" stop-color="#ff008e"/><stop offset="0.972" stop-color="#ff0055"/><stop offset="1" stop-color="#ff004d"/></linearGradient><linearGradient id="g184" gradientUnits="userSpaceOnUse" x1="433" x2="989"><stop offset="0" stop-color="#004dff"/><stop offset="0.072" stop-color="#0449ff"/><stop offset="0.281" stop-color="#3b3dff"/><stop offset="0.406" stop-color="#6c32ff"/><stop offset="0.554" stop-color="#be27ff"/><stop offset="0.647" stop-color="#ff20fe"/><stop offset="0.752" stop-color="#ff09bb"/><stop offset="0.827" stop-color="#ff0094"/><stop offset="0.964" stop-color="#ff005e"/><stop offset="1" stop-color="#ff0053"/></linearGradient><linearGradient id="g185" gradientUnits="userSpaceOnUse" x1="435" x2="979"><stop offset="0" stop-color="#004bff"/><stop offset="0.07" stop-color="#0447ff"/><stop offset="0.283" stop-color="#3a3aff"/><stop offset="0.419" stop-color="#6f2eff"/><stop offset="0.562" stop-color="#bd24ff"/><stop offset="0.662" stop-color="#ff1cfd"/><stop offset="0.776" stop-color="#ff05b6"/><stop offset="0.849" stop-color="#ff0092"/><stop offset="0.993" stop-color="#ff005c"/><stop offset="1" stop-color="#ff005a"/></linearGradient><linearGradient id="g186" gradientUnits="userSpaceOnUse" x1="436" x2="970"><stop offset="0" stop-color="#0048ff"/><stop offset="0.067" stop-color="#0445ff"/><stop offset="0.281" stop-color="#3838ff"/><stop offset="0.423" stop-color="#6e2cff"/><stop offset="0.581" stop-color="#c221ff"/><stop offset="0.674" stop-color="#ff19fd"/><stop offset="0.783" stop-color="#ff04bb"/><stop offset="0.873" stop-color="#ff0090"/><stop offset="1" stop-color="#ff0060"/></linearGradient><linearGradient id="g187" gradientUnits="userSpaceOnUse" x1="438" x2="960"><stop offset="0" stop-color="#0046ff"/><stop offset="0.065" stop-color="#0443ff"/><stop offset="0.287" stop-color="#3936ff"/><stop offset="0.441" stop-color="#7329ff"/><stop offset="0.59" stop-color="#c11eff"/><stop offset="0.69" stop-color="#ff15fc"/><stop offset="0.808" stop-color="#ff00b6"/><stop offset="0.958" stop-color="#ff0076"/><stop offset="1" stop-color="#ff0068"/></linearGradient><linearGradient id="g188" gradientUnits="userSpaceOnUse" x1="439" x2="951"><stop offset="0" stop-color="#0044ff"/><stop offset="0.066" stop-color="#0441ff"/><stop offset="0.293" stop-color="#3a33ff"/><stop offset="0.441" stop-color="#7027ff"/><stop offset="0.609" stop-color="#c61aff"/><stop offset="0.703" stop-color="#ff12fc"/><stop offset="0.816" stop-color="#ff00bb"/><stop offset="0.961" stop-color="#ff007c"/><stop offset="1" stop-color="#ff006f"/></linearGradient><linearGradient id="g189" gradientUnits="userSpaceOnUse" x1="441" x2="943"><stop offset="0" stop-color="#0042ff"/><stop offset="0.064" stop-color="#043fff"/><stop offset="0.287" stop-color="#3832ff"/><stop offset="0.434" stop-color="#6b25ff"/><stop offset="0.586" stop-color="#b31aff"/><stop offset="0.713" stop-color="#ff0ffd"/><stop offset="0.825" stop-color="#ff00be"/><stop offset="0.984" stop-color="#ff007b"/><stop offset="1" stop-color="#ff0076"/></linearGradient><linearGradient id="g190" gradientUnits="userSpaceOnUse" x1="442" x2="932"><stop offset="0" stop-color="#0040ff"/><stop offset="0.069" stop-color="#053dff"/><stop offset="0.302" stop-color="#3a2eff"/><stop offset="0.469" stop-color="#7621ff"/><stop offset="0.641" stop-color="#ca14ff"/><stop offset="0.731" stop-color="#ff0cfd"/><stop offset="0.833" stop-color="#ff00c5"/><stop offset="0.984" stop-color="#ff0084"/><stop offset="1" stop-color="#ff007f"/></linearGradient><linearGradient id="g191" gradientUnits="userSpaceOnUse" x1="444" x2="924"><stop offset="0" stop-color="#003eff"/><stop offset="0.067" stop-color="#053bff"/><stop offset="0.304" stop-color="#3a2cff"/><stop offset="0.471" stop-color="#741fff"/><stop offset="0.629" stop-color="#be13ff"/><stop offset="0.746" stop-color="#ff09fc"/><stop offset="0.833" stop-color="#ff00cc"/><stop offset="0.988" stop-color="#ff008a"/><stop offset="1" stop-color="#ff0086"/></linearGradient><linearGradient id="g192" gradientUnits="userSpaceOnUse" x1="445" x2="915"><stop offset="0" stop-color="#003cff"/><stop offset="0.064" stop-color="#0539ff"/><stop offset="0.298" stop-color="#372bff"/><stop offset="0.477" stop-color="#731cff"/><stop offset="0.647" stop-color="#c010ff"/><stop offset="0.762" stop-color="#ff06fc"/><stop offset="0.847" stop-color="#ff00ce"/><stop offset="1" stop-color="#ff008e"/></linearGradient><linearGradient id="g193" gradientUnits="userSpaceOnUse" x1="447" x2="905"><stop offset="0" stop-color="#003aff"/><stop offset="0.061" stop-color="#0537ff"/><stop offset="0.306" stop-color="#3828ff"/><stop offset="0.493" stop-color="#7619ff"/><stop offset="0.655" stop-color="#bd0eff"/><stop offset="0.777" stop-color="#ff03fe"/><stop offset="0.908" stop-color="#ff00bc"/><stop offset="1" stop-color="#ff0097"/></linearGradient><linearGradient id="g194" gradientUnits="userSpaceOnUse" x1="448" x2="896"><stop offset="0" stop-color="#0038ff"/><stop offset="0.067" stop-color="#0635ff"/><stop offset="0.299" stop-color="#3627ff"/><stop offset="0.473" stop-color="#6b19ff"/><stop offset="0.661" stop-color="#b90cff"/><stop offset="0.795" stop-color="#ff00fe"/><stop offset="0.929" stop-color="#ff00bc"/><stop offset="1" stop-color="#ff00a0"/></linearGradient><linearGradient id="g195" gradientUnits="userSpaceOnUse" x1="450" x2="886"><stop offset="0" stop-color="#0036ff"/><stop offset="0.083" stop-color="#0932ff"/><stop offset="0.326" stop-color="#3b23ff"/><stop offset="0.532" stop-color="#7d13ff"/><stop offset="0.729" stop-color="#d305ff"/><stop offset="0.817" stop-color="#ff00fd"/><stop offset="0.954" stop-color="#ff00bc"/><stop offset="1" stop-color="#ff00aa"/></linearGradient><linearGradient id="g196" gradientUnits="userSpaceOnUse" x1="452" x2="876"><stop offset="0" stop-color="#0034ff"/><stop offset="0.085" stop-color="#0a30ff"/><stop offset="0.33" stop-color="#3b21ff"/><stop offset="0.538" stop-color="#7b11ff"/><stop offset="0.731" stop-color="#cb04ff"/><stop offset="0.835" stop-color="#ff00fe"/><stop offset="0.981" stop-color="#ff00bb"/><stop offset="1" stop-color="#ff00b4"/></linearGradient><linearGradient id="g197" gradientUnits="userSpaceOnUse" x1="453" x2="867"><stop offset="0" stop-color="#0032ff"/><stop offset="0.097" stop-color="#0c2dff"/><stop offset="0.324" stop-color="#3820ff"/><stop offset="0.546" stop-color="#7a0fff"/><stop offset="0.744" stop-color="#c902ff"/><stop offset="0.86" stop-color="#ff00fc"/><stop offset="0.995" stop-color="#ff00c0"/><stop offset="1" stop-color="#ff00be"/></linearGradient><linearGradient id="g198" gradientUnits="userSpaceOnUse" x1="455" x2="857"><stop offset="0" stop-color="#0030ff"/><stop offset="0.199" stop-color="#1e26ff"/><stop offset="0.403" stop-color="#4b18ff"/><stop offset="0.627" stop-color="#9208ff"/><stop offset="0.816" stop-color="#e200ff"/><stop offset="0.881" stop-color="#ff00fd"/><stop offset="1" stop-color="#ff00c8"/></linearGradient><linearGradient id="g199" gradientUnits="userSpaceOnUse" x1="456" x2="848"><stop offset="0" stop-color="#002eff"/><stop offset="0.219" stop-color="#2123ff"/><stop offset="0.434" stop-color="#5115ff"/><stop offset="0.663" stop-color="#9a05ff"/><stop offset="0.827" stop-color="#dd00ff"/><stop offset="0.903" stop-color="#ff00fd"/><stop offset="1" stop-color="#ff00d3"/></linearGradient><linearGradient id="g200" gradientUnits="userSpaceOnUse" x1="458" x2="840"><stop offset="0" stop-color="#002cff"/><stop offset="0.251" stop-color="#271fff"/><stop offset="0.466" stop-color="#5811ff"/><stop offset="0.702" stop-color="#a301ff"/><stop offset="0.906" stop-color="#f800ff"/><stop offset="0.932" stop-color="#ff00f9"/><stop offset="1" stop-color="#ff00dc"/></linearGradient><linearGradient id="g201" gradientUnits="userSpaceOnUse" x1="460" x2="830"><stop offset="0" stop-color="#002aff"/><stop offset="0.281" stop-color="#2c1cff"/><stop offset="0.524" stop-color="#650bff"/><stop offset="0.751" stop-color="#ae00ff"/><stop offset="0.951" stop-color="#ff00fd"/><stop offset="1" stop-color="#ff00e8"/></linearGradient><linearGradient id="g202" gradientUnits="userSpaceOnUse" x1="462" x2="820"><stop offset="0" stop-color="#0028ff"/><stop offset="0.318" stop-color="#3218ff"/><stop offset="0.575" stop-color="#7007ff"/><stop offset="0.749" stop-color="#a600ff"/><stop offset="0.961" stop-color="#f800ff"/><stop offset="0.989" stop-color="#ff00fa"/><stop offset="1" stop-color="#ff00f5"/></linearGradient><linearGradient id="g203" gradientUnits="userSpaceOnUse" x1="463" x2="811"><stop offset="0" stop-color="#0126ff"/><stop offset="0.293" stop-color="#2c18ff"/><stop offset="0.569" stop-color="#6a06ff"/><stop offset="0.741" stop-color="#9d00ff"/><stop offset="0.96" stop-color="#ec00ff"/><stop offset="1" stop-color="#fd00ff"/></linearGradient><linearGradient id="g204" gradientUnits="userSpaceOnUse" x1="465" x2="801"><stop offset="0" stop-color="#0124ff"/><stop offset="0.333" stop-color="#3314ff"/><stop offset="0.613" stop-color="#7202ff"/><stop offset="0.863" stop-color="#bd00ff"/><stop offset="1" stop-color="#f000ff"/></linearGradient><linearGradient id="g205" gradientUnits="userSpaceOnUse" x1="467" x2="793"><stop offset="0" stop-color="#0222ff"/><stop offset="0.331" stop-color="#3212ff"/><stop offset="0.632" stop-color="#7300ff"/><stop offset="0.883" stop-color="#bd00ff"/><stop offset="1" stop-color="#e500ff"/></linearGradient><linearGradient id="g206" gradientUnits="userSpaceOnUse" x1="470" x2="784"><stop offset="0" stop-color="#0320ff"/><stop offset="0.325" stop-color="#3011ff"/><stop offset="0.656" stop-color="#7500ff"/><stop offset="0.936" stop-color="#c500ff"/><stop offset="1" stop-color="#da00ff"/></linearGradient><linearGradient id="g207" gradientUnits="userSpaceOnUse" x1="472" x2="774"><stop offset="0" stop-color="#041eff"/><stop offset="0.338" stop-color="#320eff"/><stop offset="0.636" stop-color="#6c00ff"/><stop offset="0.927" stop-color="#b800ff"/><stop offset="1" stop-color="#cf00ff"/></linearGradient><linearGradient id="g208" gradientUnits="userSpaceOnUse" x1="474" x2="764"><stop offset="0" stop-color="#051cff"/><stop offset="0.352" stop-color="#330cff"/><stop offset="0.641" stop-color="#6900ff"/><stop offset="0.931" stop-color="#b000ff"/><stop offset="1" stop-color="#c300ff"/></linearGradient><linearGradient id="g209" gradientUnits="userSpaceOnUse" x1="476" x2="754"><stop offset="0" stop-color="#061aff"/><stop offset="0.367" stop-color="#340aff"/><stop offset="0.633" stop-color="#6300ff"/><stop offset="0.957" stop-color="#ad00ff"/><stop offset="1" stop-color="#b900ff"/></linearGradient><linearGradient id="g210" gradientUnits="userSpaceOnUse" x1="479" x2="745"><stop offset="0" stop-color="#0718ff"/><stop offset="0.376" stop-color="#3508ff"/><stop offset="0.624" stop-color="#5e00ff"/><stop offset="0.962" stop-color="#a600ff"/><stop offset="1" stop-color="#af00ff"/></linearGradient><linearGradient id="g211" gradientUnits="userSpaceOnUse" x1="481" x2="737"><stop offset="0" stop-color="#0816ff"/><stop offset="0.391" stop-color="#3606ff"/><stop offset="0.625" stop-color="#5b00ff"/><stop offset="0.977" stop-color="#a200ff"/><stop offset="1" stop-color="#a700ff"/></linearGradient><linearGradient id="g212" gradientUnits="userSpaceOnUse" x1="483" x2="727"><stop offset="0" stop-color="#0814ff"/><stop offset="0.434" stop-color="#3a03ff"/><stop offset="0.844" stop-color="#7e00ff"/><stop offset="1" stop-color="#9e00ff"/></linearGradient><linearGradient id="g213" gradientUnits="userSpaceOnUse" x1="486" x2="718"><stop offset="0" stop-color="#0a12ff"/><stop offset="0.466" stop-color="#3d00ff"/><stop offset="0.914" stop-color="#8500ff"/><stop offset="1" stop-color="#9500ff"/></linearGradient><linearGradient id="g214" gradientUnits="userSpaceOnUse" x1="489" x2="709"><stop offset="0" stop-color="#0b10ff"/><stop offset="0.473" stop-color="#3d00ff"/><stop offset="0.918" stop-color="#7f00ff"/><stop offset="1" stop-color="#8e00ff"/></linearGradient><linearGradient id="g215" gradientUnits="userSpaceOnUse" x1="491" x2="699"><stop offset="0" stop-color="#0c0eff"/><stop offset="0.5" stop-color="#3e00ff"/><stop offset="0.981" stop-color="#8200ff"/><stop offset="1" stop-color="#8500ff"/></linearGradient><linearGradient id="g216" gradientUnits="userSpaceOnUse" x1="494" x2="690"><stop offset="0" stop-color="#0d0cff"/><stop offset="0.469" stop-color="#3900ff"/><stop offset="1" stop-color="#7e00ff"/></linearGradient><linearGradient id="g217" gradientUnits="userSpaceOnUse" x1="496" x2="680"><stop offset="0" stop-color="#0e0aff"/><stop offset="0.457" stop-color="#3600ff"/><stop offset="1" stop-color="#7600ff"/></linearGradient><linearGradient id="g218" gradientUnits="userSpaceOnUse" x1="499" x2="671"><stop offset="0" stop-color="#0f08ff"/><stop offset="0.442" stop-color="#3300ff"/><stop offset="1" stop-color="#6f00ff"/></linearGradient><linearGradient id="g219" gradientUnits="userSpaceOnUse" x1="502" x2="662"><stop offset="0" stop-color="#1106ff"/><stop offset="0.45" stop-color="#3300ff"/><stop offset="1" stop-color="#6900ff"/></linearGradient><linearGradient id="g220" gradientUnits="userSpaceOnUse" x1="505" x2="653"><stop offset="0" stop-color="#1204ff"/><stop offset="0.649" stop-color="#4200ff"/><stop offset="1" stop-color="#6300ff"/></linearGradient><linearGradient id="g221" gradientUnits="userSpaceOnUse" x1="509" x2="643"><stop offset="0" stop-color="#1402ff"/><stop offset="0.791" stop-color="#4a00ff"/><stop offset="1" stop-color="#5c00ff"/></linearGradient><linearGradient id="g222" gradientUnits="userSpaceOnUse" x1="512" x2="634"><stop offset="0" stop-color="#1500ff"/><stop offset="0.951" stop-color="#5200ff"/><stop offset="1" stop-color="#5600ff"/></linearGradient><linearGradient id="g223" gradientUnits="userSpaceOnUse" x1="517" x2="625"><stop offset="0" stop-color="#1800ff"/><stop offset="1" stop-color="#5000ff"/></linearGradient><linearGradient id="g224" gradientUnits="userSpaceOnUse" x1="521" x2="615"><stop offset="0" stop-color="#1a00ff"/><stop offset="1" stop-color="#4a00ff"/></linearGradient><linearGradient id="g225" gradientUnits="userSpaceOnUse" x1="526" x2="606"><stop offset="0" stop-color="#1c00ff"/><stop offset="1" stop-color="#4500ff"/></linearGradient><linearGradient id="g226" gradientUnits="userSpaceOnUse" x1="530" x2="596"><stop offset="0" stop-color="#1e00ff"/><stop offset="1" stop-color="#4000ff"/></linearGradient><linearGradient id="g227" gradientUnits="userSpaceOnUse" x1="534" x2="586"><stop offset="0" stop-color="#2000ff"/><stop offset="1" stop-color="#3a00ff"/></linearGradient><linearGradient id="g228" gradientUnits="userSpaceOnUse" x1="538" x2="578"><stop offset="0" stop-color="#2200ff"/><stop offset="1" stop-color="#3600ff"/></linearGradient></defs>
<rect x="352" y="106" width="952.5" height="951.5" fill="#000"/>
<g clip-path="url(#lc)"><g filter="url(#fb)"><rect x="415" y="147" width="66" height="4.5" fill="url(#g0)"/><rect x="408" y="151" width="90" height="4.5" fill="url(#g1)"/><rect x="403" y="155" width="106" height="4.5" fill="url(#g2)"/><rect x="398" y="159" width="122" height="4.5" fill="url(#g3)"/><rect x="394" y="163" width="134" height="4.5" fill="url(#g4)"/><rect x="391" y="167" width="144" height="4.5" fill="url(#g5)"/><rect x="388" y="171" width="156" height="4.5" fill="url(#g6)"/><rect x="385" y="175" width="166" height="4.5" fill="url(#g7)"/><rect x="383" y="179" width="176" height="4.5" fill="url(#g8)"/><rect x="380" y="183" width="186" height="4.5" fill="url(#g9)"/><rect x="378" y="187" width="194" height="4.5" fill="url(#g10)"/><rect x="376" y="191" width="204" height="4.5" fill="url(#g11)"/><rect x="375" y="195" width="212" height="4.5" fill="url(#g12)"/><rect x="373" y="199" width="220" height="4.5" fill="url(#g13)"/><rect x="371" y="203" width="228" height="4.5" fill="url(#g14)"/><rect x="369" y="207" width="236" height="4.5" fill="url(#g15)"/><rect x="368" y="211" width="242" height="4.5" fill="url(#g16)"/><rect x="366" y="215" width="250" height="4.5" fill="url(#g17)"/><rect x="365" y="219" width="258" height="4.5" fill="url(#g18)"/><rect x="364" y="223" width="264" height="4.5" fill="url(#g19)"/><rect x="363" y="227" width="270" height="4.5" fill="url(#g20)"/><rect x="361" y="231" width="278" height="4.5" fill="url(#g21)"/><rect x="360" y="235" width="284" height="4.5" fill="url(#g22)"/><rect x="359" y="239" width="290" height="4.5" fill="url(#g23)"/><rect x="358" y="243" width="298" height="4.5" fill="url(#g24)"/><rect x="358" y="247" width="302" height="4.5" fill="url(#g25)"/><rect x="357" y="251" width="308" height="4.5" fill="url(#g26)"/><rect x="356" y="255" width="314" height="4.5" fill="url(#g27)"/><rect x="355" y="259" width="320" height="4.5" fill="url(#g28)"/><rect x="354" y="263" width="326" height="4.5" fill="url(#g29)"/><rect x="354" y="267" width="332" height="4.5" fill="url(#g30)"/><rect x="353" y="271" width="338" height="4.5" fill="url(#g31)"/><rect x="352" y="275" width="344" height="4.5" fill="url(#g32)"/><rect x="351" y="279" width="350" height="4.5" fill="url(#g33)"/><rect x="351" y="283" width="354" height="4.5" fill="url(#g34)"/><rect x="350" y="287" width="360" height="4.5" fill="url(#g35)"/><rect x="350" y="291" width="364" height="4.5" fill="url(#g36)"/><rect x="349" y="295" width="370" height="4.5" fill="url(#g37)"/><rect x="349" y="299" width="376" height="4.5" fill="url(#g38)"/><rect x="348" y="303" width="380" height="4.5" fill="url(#g39)"/><rect x="348" y="307" width="386" height="4.5" fill="url(#g40)"/><rect x="347" y="311" width="392" height="4.5" fill="url(#g41)"/><rect x="347" y="315" width="396" height="4.5" fill="url(#g42)"/><rect x="347" y="319" width="400" height="4.5" fill="url(#g43)"/><rect x="346" y="323" width="406" height="4.5" fill="url(#g44)"/><rect x="346" y="327" width="410" height="4.5" fill="url(#g45)"/><rect x="346" y="331" width="416" height="4.5" fill="url(#g46)"/><rect x="346" y="335" width="420" height="4.5" fill="url(#g47)"/><rect x="346" y="339" width="424" height="4.5" fill="url(#g48)"/><rect x="346" y="343" width="428" height="4.5" fill="url(#g49)"/><rect x="346" y="347" width="434" height="4.5" fill="url(#g50)"/><rect x="346" y="351" width="438" height="4.5" fill="url(#g51)"/><rect x="346" y="355" width="442" height="4.5" fill="url(#g52)"/><rect x="346" y="359" width="448" height="4.5" fill="url(#g53)"/><rect x="346" y="363" width="452" height="4.5" fill="url(#g54)"/><rect x="346" y="367" width="456" height="4.5" fill="url(#g55)"/><rect x="346" y="371" width="460" height="4.5" fill="url(#g56)"/><rect x="346" y="375" width="464" height="4.5" fill="url(#g57)"/><rect x="346" y="379" width="470" height="4.5" fill="url(#g58)"/><rect x="346" y="383" width="474" height="4.5" fill="url(#g59)"/><rect x="346" y="387" width="478" height="4.5" fill="url(#g60)"/><rect x="346" y="391" width="482" height="4.5" fill="url(#g61)"/><rect x="346" y="395" width="488" height="4.5" fill="url(#g62)"/><rect x="347" y="399" width="490" height="4.5" fill="url(#g63)"/><rect x="347" y="403" width="494" height="4.5" fill="url(#g64)"/><rect x="347" y="407" width="500" height="4.5" fill="url(#g65)"/><rect x="347" y="411" width="504" height="4.5" fill="url(#g66)"/><rect x="347" y="415" width="508" height="4.5" fill="url(#g67)"/><rect x="347" y="419" width="512" height="4.5" fill="url(#g68)"/><rect x="348" y="423" width="516" height="4.5" fill="url(#g69)"/><rect x="348" y="427" width="520" height="4.5" fill="url(#g70)"/><rect x="348" y="431" width="524" height="4.5" fill="url(#g71)"/><rect x="348" y="435" width="530" height="4.5" fill="url(#g72)"/><rect x="348" y="439" width="534" height="4.5" fill="url(#g73)"/><rect x="348" y="443" width="538" height="4.5" fill="url(#g74)"/><rect x="349" y="447" width="542" height="4.5" fill="url(#g75)"/><rect x="349" y="451" width="546" height="4.5" fill="url(#g76)"/><rect x="349" y="455" width="550" height="4.5" fill="url(#g77)"/><rect x="349" y="459" width="554" height="4.5" fill="url(#g78)"/><rect x="350" y="463" width="558" height="4.5" fill="url(#g79)"/><rect x="350" y="467" width="562" height="4.5" fill="url(#g80)"/><rect x="350" y="471" width="566" height="4.5" fill="url(#g81)"/><rect x="350" y="475" width="570" height="4.5" fill="url(#g82)"/><rect x="351" y="479" width="574" height="4.5" fill="url(#g83)"/><rect x="351" y="483" width="578" height="4.5" fill="url(#g84)"/><rect x="351" y="487" width="584" height="4.5" fill="url(#g85)"/><rect x="351" y="491" width="588" height="4.5" fill="url(#g86)"/><rect x="352" y="495" width="590" height="4.5" fill="url(#g87)"/><rect x="352" y="499" width="596" height="4.5" fill="url(#g88)"/><rect x="352" y="503" width="600" height="4.5" fill="url(#g89)"/><rect x="353" y="507" width="602" height="4.5" fill="url(#g90)"/><rect x="353" y="511" width="608" height="4.5" fill="url(#g91)"/><rect x="354" y="515" width="610" height="4.5" fill="url(#g92)"/><rect x="354" y="519" width="614" height="4.5" fill="url(#g93)"/><rect x="354" y="523" width="620" height="4.5" fill="url(#g94)"/><rect x="355" y="527" width="622" height="4.5" fill="url(#g95)"/><rect x="355" y="531" width="626" height="4.5" fill="url(#g96)"/><rect x="356" y="535" width="630" height="4.5" fill="url(#g97)"/><rect x="356" y="539" width="634" height="4.5" fill="url(#g98)"/><rect x="357" y="543" width="638" height="4.5" fill="url(#g99)"/><rect x="357" y="547" width="642" height="4.5" fill="url(#g100)"/><rect x="358" y="551" width="646" height="4.5" fill="url(#g101)"/><rect x="359" y="555" width="650" height="4.5" fill="url(#g102)"/><rect x="359" y="559" width="654" height="4.5" fill="url(#g103)"/><rect x="360" y="563" width="656" height="4.5" fill="url(#g104)"/><rect x="360" y="567" width="662" height="4.5" fill="url(#g105)"/><rect x="361" y="571" width="664" height="4.5" fill="url(#g106)"/><rect x="362" y="575" width="668" height="4.5" fill="url(#g107)"/><rect x="362" y="579" width="672" height="4.5" fill="url(#g108)"/><rect x="363" y="583" width="676" height="4.5" fill="url(#g109)"/><rect x="364" y="587" width="680" height="4.5" fill="url(#g110)"/><rect x="364" y="591" width="684" height="4.5" fill="url(#g111)"/><rect x="365" y="595" width="686" height="4.5" fill="url(#g112)"/><rect x="365" y="599" width="692" height="4.5" fill="url(#g113)"/><rect x="366" y="603" width="694" height="4.5" fill="url(#g114)"/><rect x="367" y="607" width="698" height="4.5" fill="url(#g115)"/><rect x="367" y="611" width="702" height="4.5" fill="url(#g116)"/><rect x="368" y="615" width="706" height="4.5" fill="url(#g117)"/><rect x="369" y="619" width="708" height="4.5" fill="url(#g118)"/><rect x="369" y="623" width="714" height="4.5" fill="url(#g119)"/><rect x="370" y="627" width="716" height="4.5" fill="url(#g120)"/><rect x="371" y="631" width="720" height="4.5" fill="url(#g121)"/><rect x="371" y="635" width="724" height="4.5" fill="url(#g122)"/><rect x="372" y="639" width="728" height="4.5" fill="url(#g123)"/><rect x="373" y="643" width="730" height="4.5" fill="url(#g124)"/><rect x="373" y="647" width="736" height="4.5" fill="url(#g125)"/><rect x="374" y="651" width="738" height="4.5" fill="url(#g126)"/><rect x="375" y="655" width="742" height="4.5" fill="url(#g127)"/><rect x="376" y="659" width="746" height="4.5" fill="url(#g128)"/><rect x="376" y="663" width="750" height="4.5" fill="url(#g129)"/><rect x="377" y="667" width="754" height="4.5" fill="url(#g130)"/><rect x="378" y="671" width="756" height="4.5" fill="url(#g131)"/><rect x="379" y="675" width="760" height="4.5" fill="url(#g132)"/><rect x="380" y="679" width="764" height="4.5" fill="url(#g133)"/><rect x="380" y="683" width="768" height="4.5" fill="url(#g134)"/><rect x="381" y="687" width="772" height="4.5" fill="url(#g135)"/><rect x="382" y="691" width="774" height="4.5" fill="url(#g136)"/><rect x="383" y="695" width="778" height="4.5" fill="url(#g137)"/><rect x="384" y="699" width="782" height="4.5" fill="url(#g138)"/><rect x="385" y="703" width="784" height="4.5" fill="url(#g139)"/><rect x="385" y="707" width="788" height="4.5" fill="url(#g140)"/><rect x="386" y="711" width="792" height="4.5" fill="url(#g141)"/><rect x="387" y="715" width="794" height="4.5" fill="url(#g142)"/><rect x="388" y="719" width="798" height="4.5" fill="url(#g143)"/><rect x="389" y="723" width="802" height="4.5" fill="url(#g144)"/><rect x="390" y="727" width="804" height="4.5" fill="url(#g145)"/><rect x="391" y="731" width="808" height="4.5" fill="url(#g146)"/><rect x="392" y="735" width="810" height="4.5" fill="url(#g147)"/><rect x="393" y="739" width="814" height="4.5" fill="url(#g148)"/><rect x="394" y="743" width="816" height="4.5" fill="url(#g149)"/><rect x="394" y="747" width="820" height="4.5" fill="url(#g150)"/><rect x="395" y="751" width="824" height="4.5" fill="url(#g151)"/><rect x="396" y="755" width="828" height="4.5" fill="url(#g152)"/><rect x="397" y="759" width="830" height="4.5" fill="url(#g153)"/><rect x="398" y="763" width="826" height="4.5" fill="url(#g154)"/><rect x="399" y="767" width="828" height="4.5" fill="url(#g155)"/><rect x="400" y="771" width="828" height="4.5" fill="url(#g156)"/><rect x="401" y="775" width="822" height="4.5" fill="url(#g157)"/><rect x="402" y="779" width="826" height="4.5" fill="url(#g158)"/><rect x="403" y="783" width="820" height="4.5" fill="url(#g159)"/><rect x="404" y="787" width="810" height="4.5" fill="url(#g160)"/><rect x="405" y="791" width="798" height="4.5" fill="url(#g161)"/><rect x="406" y="795" width="788" height="4.5" fill="url(#g162)"/><rect x="407" y="799" width="778" height="4.5" fill="url(#g163)"/><rect x="408" y="803" width="768" height="4.5" fill="url(#g164)"/><rect x="410" y="807" width="756" height="4.5" fill="url(#g165)"/><rect x="411" y="811" width="746" height="4.5" fill="url(#g166)"/><rect x="412" y="815" width="736" height="4.5" fill="url(#g167)"/><rect x="413" y="819" width="726" height="4.5" fill="url(#g168)"/><rect x="414" y="823" width="716" height="4.5" fill="url(#g169)"/><rect x="415" y="827" width="704" height="4.5" fill="url(#g170)"/><rect x="416" y="831" width="694" height="4.5" fill="url(#g171)"/><rect x="418" y="835" width="684" height="4.5" fill="url(#g172)"/><rect x="419" y="839" width="672" height="4.5" fill="url(#g173)"/><rect x="420" y="843" width="662" height="4.5" fill="url(#g174)"/><rect x="421" y="847" width="652" height="4.5" fill="url(#g175)"/><rect x="422" y="851" width="642" height="4.5" fill="url(#g176)"/><rect x="424" y="855" width="630" height="4.5" fill="url(#g177)"/><rect x="425" y="859" width="620" height="4.5" fill="url(#g178)"/><rect x="426" y="863" width="610" height="4.5" fill="url(#g179)"/><rect x="428" y="867" width="598" height="4.5" fill="url(#g180)"/><rect x="429" y="871" width="588" height="4.5" fill="url(#g181)"/><rect x="430" y="875" width="578" height="4.5" fill="url(#g182)"/><rect x="432" y="879" width="566" height="4.5" fill="url(#g183)"/><rect x="433" y="883" width="556" height="4.5" fill="url(#g184)"/><rect x="435" y="887" width="544" height="4.5" fill="url(#g185)"/><rect x="436" y="891" width="534" height="4.5" fill="url(#g186)"/><rect x="438" y="895" width="522" height="4.5" fill="url(#g187)"/><rect x="439" y="899" width="512" height="4.5" fill="url(#g188)"/><rect x="441" y="903" width="502" height="4.5" fill="url(#g189)"/><rect x="442" y="907" width="490" height="4.5" fill="url(#g190)"/><rect x="444" y="911" width="480" height="4.5" fill="url(#g191)"/><rect x="445" y="915" width="470" height="4.5" fill="url(#g192)"/><rect x="447" y="919" width="458" height="4.5" fill="url(#g193)"/><rect x="448" y="923" width="448" height="4.5" fill="url(#g194)"/><rect x="450" y="927" width="436" height="4.5" fill="url(#g195)"/><rect x="452" y="931" width="424" height="4.5" fill="url(#g196)"/><rect x="453" y="935" width="414" height="4.5" fill="url(#g197)"/><rect x="455" y="939" width="402" height="4.5" fill="url(#g198)"/><rect x="456" y="943" width="392" height="4.5" fill="url(#g199)"/><rect x="458" y="947" width="382" height="4.5" fill="url(#g200)"/><rect x="460" y="951" width="370" height="4.5" fill="url(#g201)"/><rect x="462" y="955" width="358" height="4.5" fill="url(#g202)"/><rect x="463" y="959" width="348" height="4.5" fill="url(#g203)"/><rect x="465" y="963" width="336" height="4.5" fill="url(#g204)"/><rect x="467" y="967" width="326" height="4.5" fill="url(#g205)"/><rect x="470" y="971" width="314" height="4.5" fill="url(#g206)"/><rect x="472" y="975" width="302" height="4.5" fill="url(#g207)"/><rect x="474" y="979" width="290" height="4.5" fill="url(#g208)"/><rect x="476" y="983" width="278" height="4.5" fill="url(#g209)"/><rect x="479" y="987" width="266" height="4.5" fill="url(#g210)"/><rect x="481" y="991" width="256" height="4.5" fill="url(#g211)"/><rect x="483" y="995" width="244" height="4.5" fill="url(#g212)"/><rect x="486" y="999" width="232" height="4.5" fill="url(#g213)"/><rect x="489" y="1003" width="220" height="4.5" fill="url(#g214)"/><rect x="491" y="1007" width="208" height="4.5" fill="url(#g215)"/><rect x="494" y="1011" width="196" height="4.5" fill="url(#g216)"/><rect x="496" y="1015" width="184" height="4.5" fill="url(#g217)"/><rect x="499" y="1019" width="172" height="4.5" fill="url(#g218)"/><rect x="502" y="1023" width="160" height="4.5" fill="url(#g219)"/><rect x="505" y="1027" width="148" height="4.5" fill="url(#g220)"/><rect x="509" y="1031" width="134" height="4.5" fill="url(#g221)"/><rect x="512" y="1035" width="122" height="4.5" fill="url(#g222)"/><rect x="517" y="1039" width="108" height="4.5" fill="url(#g223)"/><rect x="521" y="1043" width="94" height="4.5" fill="url(#g224)"/><rect x="526" y="1047" width="80" height="4.5" fill="url(#g225)"/><rect x="530" y="1051" width="66" height="4.5" fill="url(#g226)"/><rect x="534" y="1055" width="52" height="4.5" fill="url(#g227)"/><rect x="538" y="1059" width="40" height="4.5" fill="url(#g228)"/></g></g>
<path d="M335 1057.0H353M335 951.3H353M335 845.7H353M335 740.0H353M335 634.3H353M335 528.6H353M335 423.0H353M335 317.3H353M335 211.6H353M335 106.0H353M353.3 1057V1075.5M472.1 1057V1075.5M590.9 1057V1075.5M709.7 1057V1075.5M828.5 1057V1075.5M947.3 1057V1075.5M1066.1 1057V1075.5M1184.9 1057V1075.5M1303.7 1057V1075.5" stroke="#111" stroke-width="2" fill="none"/>
<polygon points="556.2,214.4 1194.2,747.6 509.3,1006.9" fill="none" stroke="#000" stroke-opacity=".82" stroke-width="5" stroke-linejoin="round"/>
<rect x="547.3" y="205.5" width="17.8" height="17.8" rx="1" fill="#128a2c" stroke="#0a5a16" stroke-width="2.4"/>
<rect x="875.3" y="479.9" width="17.8" height="17.8" rx="1" fill="#fff21e" stroke="#141408" stroke-width="2.4"/>
<rect x="1185.3" y="738.7" width="17.8" height="17.8" rx="1" fill="#e81414" stroke="#a00a0a" stroke-width="2.4"/>
<rect x="781.8" y="891.9" width="17.8" height="17.8" rx="1" fill="#c41ac8" stroke="#6e0a80" stroke-width="2.4"/>
<rect x="500.4" y="998" width="17.8" height="17.8" rx="1" fill="#1a14dc" stroke="#0c0c96" stroke-width="2.4"/>
<rect x="518.9" y="683.4" width="17.8" height="17.8" rx="1" fill="#22ece6" stroke="#0c4858" stroke-width="2.4"/>
<rect x="716.3" y="700.1" width="17.8" height="17.8" rx="1" fill="#fcfcfc" stroke="#111" stroke-width="2.4"/>
<circle cx="513" cy="206.8" r="8.4" fill="#0a4a14" stroke="#083a0e" stroke-width="2.4"/>
<circle cx="917.6" cy="529.4" r="8.4" fill="#fff9b0" stroke="#141408" stroke-width="2.4"/>
<circle cx="1214" cy="767.5" r="8.4" fill="#e01414" stroke="#a00a0a" stroke-width="2.4"/>
<circle cx="821.5" cy="902.8" r="8.4" fill="#c418c8" stroke="#7a0e8a" stroke-width="2.4"/>
<circle cx="519.6" cy="1012" r="8.4" fill="#1a14dc" stroke="#0c0c96" stroke-width="2.4" opacity=".45"/>
<circle cx="513.7" cy="721" r="8.4" fill="#7af0f0" stroke="#0c4858" stroke-width="2.4"/>
<circle cx="711.3" cy="755.2" r="8.4" fill="#f6f6f6" stroke="#111" stroke-width="2.4"/>
<g fill="none" stroke="#fff" stroke-opacity=".8" stroke-width="7.6" stroke-linecap="round" filter="url(#bl)"><path d="M519.6 1012L513.00 206.75" stroke-dasharray="0.01 16.020"/><path d="M1214 767.5L512.96 206.77" stroke-dasharray="0.01 16.020"/><path d="M519.6 1012L1214.05 767.48" stroke-dasharray="0.01 15.994"/></g>
</svg><div class="abs lab yl" style="top:1044.5px">0</div><div class="abs lab yl" style="top:938.8px">0.1</div><div class="abs lab yl" style="top:833.2px">0.2</div><div class="abs lab yl" style="top:727.5px">0.3</div><div class="abs lab yl" style="top:621.8px">0.4</div><div class="abs lab yl" style="top:516.1px">0.5</div><div class="abs lab yl" style="top:410.5px">0.6</div><div class="abs lab yl" style="top:304.8px">0.7</div><div class="abs lab yl" style="top:199.1px">0.8</div><div class="abs lab yl" style="top:93.5px">0.9</div><div class="abs lab xl" style="left:313.3px;top:1081px">0</div><div class="abs lab xl" style="left:432.1px;top:1081px">0.1</div><div class="abs lab xl" style="left:550.9px;top:1081px">0.2</div><div class="abs lab xl" style="left:669.7px;top:1081px">0.3</div><div class="abs lab xl" style="left:788.5px;top:1081px">0.4</div><div class="abs lab xl" style="left:907.3px;top:1081px">0.5</div><div class="abs lab xl" style="left:1026.1px;top:1081px">0.6</div><div class="abs lab xl" style="left:1144.9px;top:1081px">0.7</div><div class="abs lab xl" style="left:1263.7px;top:1081px">0.8</div>
<div class="abs info" style="top:970px;left:11px;font-weight:bold;letter-spacing:0">实测色彩范围</div>
<div class="abs info" style="top:1022px">199.3% of Rec. 709</div>
<div class="abs info" style="top:1072px">146.9% of DCi-P3</div>
<div class="abs info" style="top:1122px">105.4% of Rec. 2020</div>
<svg class="abs" style="left:1208px;top:1120px" width="100" height="44" viewBox="0 0 100 44">
<path d="M3 13Q30 -1 61 11L66 22L61 33Q30 45 4 30Z" fill="#f1f3f9" stroke="#f1f3f9" stroke-width="3" stroke-linejoin="round"/>
<path d="M62.9 8H80.4A15.650 15.650 0 0 1 80.4 39.3H56.9A39 23.700 0 0 0 62.9 8Z" fill="#1c4c9e"/>
<path d="M3.8 13.5Q30 -4.1 60 11.5Q30 2.3 3.8 13.500Z" fill="#1c4c9e"/>
<path d="M4.8 30Q30 48 59.8 32.8Q30 41.6 4.8 30Z" fill="#1c4c9e"/>
<circle cx="30.9" cy="21.6" r="12" fill="#1c4c9e"/>
</svg>
<div class="abs logo">HD199.COM</div>
</body></html>
